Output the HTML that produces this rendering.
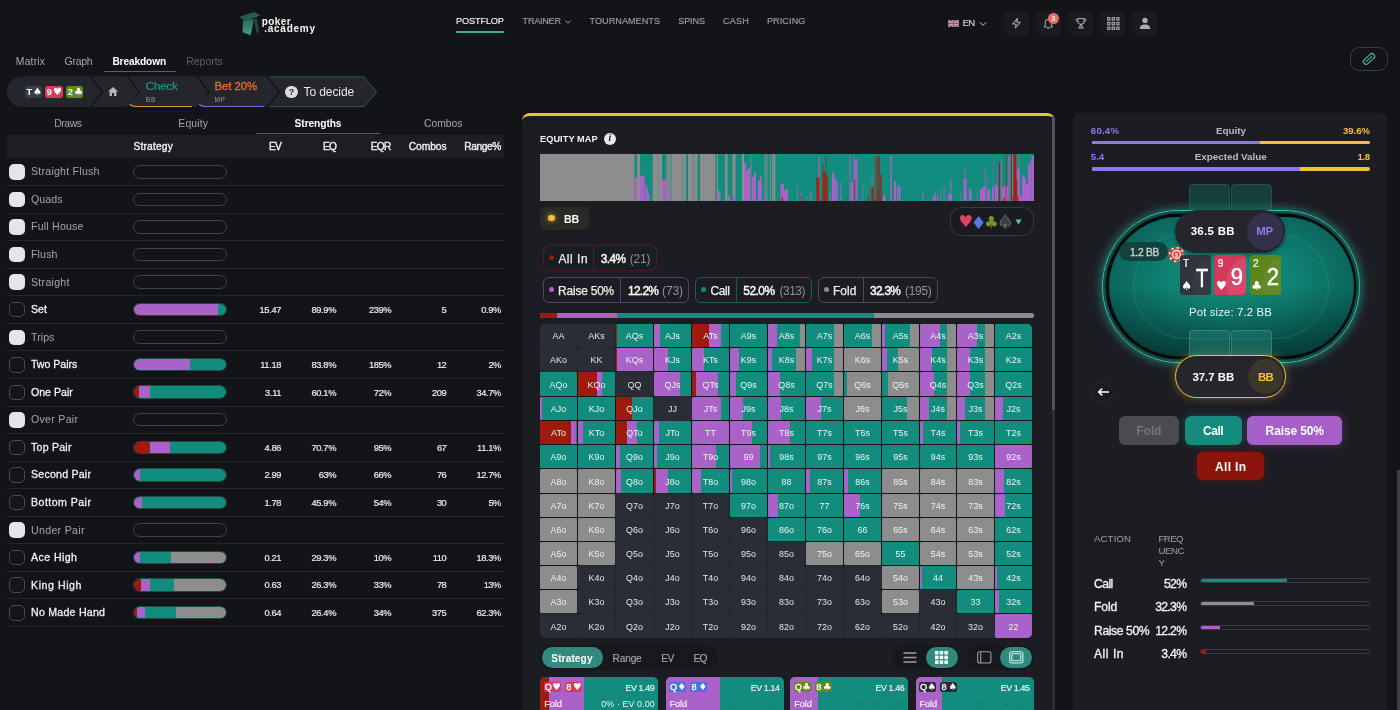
<!DOCTYPE html>
<html lang="en"><head><meta charset="utf-8"><title>Poker Academy - Postflop</title>
<style>
*{box-sizing:border-box;margin:0;padding:0}
html,body{width:1400px;height:710px;overflow:hidden;background:#131417}
body{position:relative;font-family:"Liberation Sans",sans-serif;color:#e8e8ec;font-size:11px}
#root{position:absolute;left:0;top:0;width:1400px;height:710px;overflow:hidden;will-change:transform}
.a{position:absolute}
.t{position:absolute;white-space:nowrap;line-height:1}
.b{font-weight:bold}
.r{text-align:right}
.c{text-align:center}
.nav{font-size:10.5px;letter-spacing:.35px;color:#a9abb3;top:16px}
.ib{position:absolute;top:11px;width:25px;height:25px;border-radius:6px;background:#1a1b1f}
.cb{position:absolute;left:9.4px;width:15.500px;height:15.500px;border-radius:5px}
.cb.on{background:#e4e4ea}
.cb.off{background:#141518;border:1px solid #474a54}
.lbl{position:absolute;left:31px;font-size:11.5px;line-height:1;white-space:nowrap;letter-spacing:.2px}
.sb{position:absolute;left:133.200px;width:93.500px;height:13.6px;border-radius:7px;border:1px solid #3f434c;overflow:hidden;background:#131417}
.sb.f{border-color:#1d4a45}
.sb i{position:absolute;top:0;bottom:0;display:block}
.num{position:absolute;font-size:9.5px;line-height:1;white-space:nowrap;text-align:right;width:60px;color:#ececf0}
.sep{position:absolute;left:7.4px;width:496.500px;height:1px;background:#24262c}
.cell{position:absolute;overflow:hidden;color:#f2f2f4;font-size:8.9px;text-align:center;letter-spacing:.05px}
.cell i{position:absolute;top:0;bottom:0;display:block}
.cell span{position:absolute;left:0;right:0;top:1px;bottom:-1px;z-index:2}
.chip{position:absolute;border-radius:6px;border:1px solid #444;height:26px}
</style></head><body>
<div id="root"><svg class="a" style="left:238px;top:10px" width="26" height="28" viewBox="0 0 26 28">
<defs><linearGradient id="lg1" x1="0" y1="0" x2="0" y2="1"><stop offset="0" stop-color="#2b675c"/><stop offset="1" stop-color="#459a88"/></linearGradient></defs>
<polygon points="16,9.5 18.6,8.0 21.2,21.7 18.5,23.4" fill="#234840"/>
<polygon points="5,8.8 16,9.5 12.7,25.3 4.6,22.3" fill="url(#lg1)"/>
<polygon points="1.7,6.7 16.2,2.1 22.5,5.6 7.8,10.6" fill="#2a5b51"/>
<polygon points="1.7,6.700 7.8,10.6 7.6,11.8 2.0,8.200" fill="#1e463e"/>
</svg>
<div class="t" style="top:17.00px;font-size:10.0px;color:#f4f4f6;letter-spacing:0.417px;font-weight:bold;left:261.70px;">poker</div>
<div class="t" style="top:24.00px;font-size:10.0px;color:#f4f4f6;letter-spacing:0.745px;font-weight:bold;left:264.20px;">.academy</div>
<div class="t" style="top:17.00px;font-size:9.1px;color:#f4f4f6;letter-spacing:-0.106px;-webkit-text-stroke:0.15px #f4f4f6;left:456.10px;">POSTFLOP</div>
<div class="t" style="top:17.00px;font-size:9.1px;color:#9c9ea6;letter-spacing:-0.257px;-webkit-text-stroke:0.15px #9c9ea6;left:522.60px;">TRAINER</div>
<div class="t" style="top:17.00px;font-size:9.1px;color:#9c9ea6;letter-spacing:0.029px;-webkit-text-stroke:0.15px #9c9ea6;left:589.60px;">TOURNAMENTS</div>
<div class="t" style="top:17.00px;font-size:9.1px;color:#9c9ea6;letter-spacing:-0.152px;-webkit-text-stroke:0.15px #9c9ea6;left:678.30px;">SPINS</div>
<div class="t" style="top:17.00px;font-size:9.1px;color:#9c9ea6;letter-spacing:0.239px;-webkit-text-stroke:0.15px #9c9ea6;left:722.90px;">CASH</div>
<div class="t" style="top:17.00px;font-size:9.1px;color:#9c9ea6;letter-spacing:0.097px;-webkit-text-stroke:0.15px #9c9ea6;left:766.90px;">PRICING</div>
<svg class="a" style="left:564px;top:18.5px" width="8" height="6" viewBox="0 0 8 6"><path d="M1.4 1.6 L4 4.1 L6.6 1.6" fill="none" stroke="#9c9ea6" stroke-width="1"/></svg>
<div class="a" style="left:456px;top:30.7px;width:48.3px;height:2.6px;background:#4da79e;border-radius:1.3px"></div>
<svg class="a" style="left:948px;top:19.5px" width="11" height="7" viewBox="0 0 11 7"><rect width="11" height="7" fill="#3b3f6e"/><path d="M0 0L11 7M11 0L0 7" stroke="#c9c9d4" stroke-width="1.6"/><path d="M0 0L11 7M11 0L0 7" stroke="#b3495a" stroke-width=".7"/><path d="M5.5 0V7M0 3.5H11" stroke="#c9c9d4" stroke-width="2.4"/><path d="M5.5 0V7M0 3.5H11" stroke="#b3495a" stroke-width="1.3"/></svg>
<div class="t" style="top:18.00px;font-size:9.6px;color:#c9cad0;letter-spacing:-0.700px;-webkit-text-stroke:0.2px #c9cad0;left:962.50px;">EN</div>
<svg class="a" style="left:979px;top:20.8px" width="8" height="6" viewBox="0 0 8 6"><path d="M1 1.4 L4 4.4 L7 1.4" fill="none" stroke="#c9cad0" stroke-width="1"/></svg>
<div class="ib" style="left:1004px"></div>
<div class="ib" style="left:1036px"></div>
<div class="ib" style="left:1068px"></div>
<div class="ib" style="left:1100px"></div>
<div class="ib" style="left:1132px"></div>
<svg class="a" style="left:1010px;top:17.3px" width="13" height="12.400" viewBox="0 0 13 15" preserveAspectRatio="none"><path d="M7.6 1.6 L2.6 8.4 H6.2 L5.2 13.2 L10.4 6.4 H6.8 Z" fill="none" stroke="#a3a5ac" stroke-width="1.1" stroke-linejoin="round"/></svg>
<svg class="a" style="left:1041px;top:16.2px" width="16" height="14.800" viewBox="0 0 16 17" preserveAspectRatio="none"><path d="M4.2 11.6 V7.6 C4.2 5.2 5.6 3.8 7.4 3.8 C9.2 3.8 10.6 5.2 10.6 7.6 V11.6 L11.6 12.8 H3.2 Z" fill="none" stroke="#a3a5ac" stroke-width="1.1" stroke-linejoin="round"/><path d="M6.4 14.2 H8.4" stroke="#a3a5ac" stroke-width="1.1" stroke-linecap="round"/></svg>
<div class="a" style="left:1048px;top:12.5px;width:11px;height:11px;border-radius:50%;background:#ee6a66"></div>
<div class="t b c" style="left:1048px;top:14.5px;width:11px;font-size:7px;color:#fff">3</div>
<svg class="a" style="left:1073px;top:16.3px" width="16" height="14.600" viewBox="0 0 16 17" preserveAspectRatio="none"><path d="M5 2.8 H11 V6.4 C11 8.4 9.6 9.6 8 9.6 C6.4 9.6 5 8.4 5 6.4 Z" fill="none" stroke="#a3a5ac" stroke-width="1.1" stroke-linejoin="round"/><path d="M5 3.8 H3 C3 5.8 3.8 6.8 5.2 7 M11 3.8 H13 C13 5.8 12.2 6.8 10.8 7" fill="none" stroke="#a3a5ac" stroke-width="1"/><path d="M8 9.6 L6.2 13.6 H9.8 Z M5.4 14 H10.6" fill="none" stroke="#a3a5ac" stroke-width="1.1" stroke-linejoin="round"/></svg>
<svg class="a" style="left:1106.7px;top:16.900px" width="13" height="13.500" viewBox="0 0 13 13.5"><rect x="0.00" y="0.00" width="3.6" height="3.700" rx=".8" fill="#9d9fa5"/><rect x="1.20" y="1.25" width="1.2" height="1.2" fill="#1a1b1f"/><rect x="4.55" y="0.00" width="3.6" height="3.700" rx=".8" fill="#9d9fa5"/><rect x="5.75" y="1.25" width="1.2" height="1.2" fill="#1a1b1f"/><rect x="9.10" y="0.00" width="3.6" height="3.700" rx=".8" fill="#9d9fa5"/><rect x="10.30" y="1.25" width="1.2" height="1.2" fill="#1a1b1f"/><rect x="0.00" y="4.75" width="3.6" height="3.700" rx=".8" fill="#9d9fa5"/><rect x="1.20" y="6.00" width="1.2" height="1.2" fill="#1a1b1f"/><rect x="4.55" y="4.75" width="3.6" height="3.700" rx=".8" fill="#9d9fa5"/><rect x="5.75" y="6.00" width="1.2" height="1.2" fill="#1a1b1f"/><rect x="9.10" y="4.75" width="3.6" height="3.700" rx=".8" fill="#9d9fa5"/><rect x="10.30" y="6.00" width="1.2" height="1.2" fill="#1a1b1f"/><rect x="0.00" y="9.50" width="3.6" height="3.700" rx=".8" fill="#9d9fa5"/><rect x="1.20" y="10.75" width="1.2" height="1.2" fill="#1a1b1f"/><rect x="4.55" y="9.50" width="3.6" height="3.700" rx=".8" fill="#9d9fa5"/><rect x="5.75" y="10.75" width="1.2" height="1.2" fill="#1a1b1f"/><rect x="9.10" y="9.50" width="3.6" height="3.700" rx=".8" fill="#9d9fa5"/><rect x="10.30" y="10.75" width="1.2" height="1.2" fill="#1a1b1f"/></svg>
<svg class="a" style="left:1138px;top:16px" width="14" height="15" viewBox="0 0 14 15"><circle cx="7" cy="4.4" r="2.7" fill="#a9abb2"/><path d="M1.8 13 C1.8 9.8 4 8.4 7 8.4 C10 8.4 12.2 9.8 12.2 13 Z" fill="#a9abb2"/></svg>
<div class="a" style="left:1350.2px;top:47px;width:37.800px;height:24px;border:1px solid #3a3d45;border-radius:9.5px"></div>
<svg class="a" style="left:1361.2px;top:51px" width="16" height="16" viewBox="-8 -8 16 16"><g transform="rotate(-42)" fill="none" stroke="#5aab99" stroke-linecap="round"><rect x="-6.6" y="-2.700" width="13.2" height="5.4" rx="2.700" stroke-width="1.25"/><path d="M-3.6 0 H3.600" stroke-width="1.2"/></g></svg>
<div class="t" style="top:57.00px;font-size:10.4px;color:#a5a7af;letter-spacing:0.178px;left:15.80px;">Matrix</div>
<div class="t" style="top:57.00px;font-size:10.4px;color:#a5a7af;letter-spacing:-0.251px;left:64.60px;">Graph</div>
<div class="t" style="top:57.00px;font-size:10.2px;color:#ffffff;letter-spacing:-0.135px;font-weight:bold;left:112.40px;">Breakdown</div>
<div class="t" style="top:57.00px;font-size:10.4px;color:#5d6068;letter-spacing:0.014px;left:186.30px;">Reports</div>
<div class="a" style="left:103.6px;top:70.7px;width:72px;height:1.6px;background:#2b7469"></div>
<svg class="a" style="left:0;top:74px" width="390" height="36" viewBox="0 74 390 36">
<path d="M22.2 76.6 H89.5 L101.5 91.8 L89.5 107 H22.2 A15.2 15.2 0 0 1 22.2 76.6 Z" fill="#24262c"/>
<path d="M91.3 76.6 H126.5 L138.5 91.8 L126.5 107 H91.3 L103.3 91.8 Z" fill="#24262c"/>
<path d="M128.300 76.6 H196 L208 91.8 L196 107 H135.500 Q131.3 107 128.9 103.800 L140.3 91.8 Z" fill="#24262c"/>
<path d="M129.400 104.2 Q131.800 106.500 136.300 106.500 H192" fill="none" stroke="#c9a33a" stroke-width="1.2"/>
<path d="M268.400 76.9 H364 L376.600 91.8 L364 106.700 H268.400 L280.400 91.8 Z" fill="#24262c"/>
<path d="M269.8 76.9 H364 L376.600 91.8 L364 106.700 H269.800" fill="none" stroke="#2c5a52" stroke-width="1"/>
<path d="M197.800 76.6 H266.600 L278.600 91.8 L266.600 107 H205 Q200.800 107 198.400 103.800 L209.800 91.8 Z" fill="#24262c"/>
<path d="M198.900 104.2 Q201.300 106.500 205.800 106.500 H264" fill="none" stroke="#7a6be0" stroke-width="1.2"/>
</svg>
<div class="a" style="left:24.7px;top:86.3px;width:17.1px;height:11.3px;border-radius:3px;background:#3a3d4a"></div>
<div class="t" style="top:88.00px;font-size:9.2px;color:#fff;font-weight:bold;left:26.50px;">T</div>
<div class="t" style="left:32.9px;top:86.6px;font-size:10px;color:#fff;font-family:'DejaVu Sans',sans-serif">&#9824;</div>
<div class="a" style="left:44.9px;top:86.3px;width:17.9px;height:11.3px;border-radius:3px;background:#d63b5b"></div>
<div class="t" style="top:88.00px;font-size:9.2px;color:#fff;font-weight:bold;left:46.70px;">9</div>
<div class="t" style="left:53.099999999999994px;top:86.6px;font-size:10px;color:#fff;font-family:'DejaVu Sans',sans-serif">&#9829;</div>
<div class="a" style="left:65.9px;top:86.3px;width:17.3px;height:11.3px;border-radius:3px;background:#5f8a1e"></div>
<div class="t" style="top:88.00px;font-size:9.2px;color:#fff;font-weight:bold;left:67.70px;">2</div>
<div class="t" style="left:74.10000000000001px;top:86.6px;font-size:10px;color:#fff;font-family:'DejaVu Sans',sans-serif">&#9827;</div>
<svg class="a" style="left:107px;top:86.300px" width="12" height="11" viewBox="0 0 12 11"><path d="M6 1 L1 5.4 H2.6 V10 H5 V7 H7 V10 H9.4 V5.4 H11 Z" fill="#b4b6bd"/></svg>
<div class="t" style="top:80.00px;font-size:11.6px;color:#1f9c89;letter-spacing:-0.245px;-webkit-text-stroke:0.15px #1f9c89;left:145.80px;">Check</div>
<div class="t" style="top:97.00px;font-size:6.6px;color:#9a9ca5;letter-spacing:0.795px;left:145.80px;">BB</div>
<div class="t" style="top:81.00px;font-size:11.4px;color:#e8702a;letter-spacing:-0.066px;-webkit-text-stroke:0.3px #e8702a;left:214.50px;">Bet 20%</div>
<div class="t" style="top:97.00px;font-size:6.6px;color:#9a9ca5;letter-spacing:0.499px;left:214.50px;">MP</div>
<div class="a" style="left:285.2px;top:85.800px;width:12.4px;height:12.4px;border-radius:50%;background:#dcdde2"></div>
<div class="t" style="top:88.00px;font-size:9px;color:#24262c;font-weight:bold;left:91.40px;width:400px;text-align:center;">?</div>
<div class="t" style="top:86.00px;font-size:12px;color:#e6e7ea;letter-spacing:-0.084px;left:303.50px;">To decide</div>
<div class="t" style="top:119.00px;font-size:10.4px;color:#a5a7af;letter-spacing:-0.392px;left:54.20px;">Draws</div>
<div class="t" style="top:119.00px;font-size:10.4px;color:#a5a7af;letter-spacing:0.159px;left:178.30px;">Equity</div>
<div class="t" style="top:119.00px;font-size:10.2px;color:#ffffff;letter-spacing:-0.076px;font-weight:bold;left:294.60px;">Strengths</div>
<div class="t" style="top:119.00px;font-size:10.4px;color:#a5a7af;letter-spacing:-0.065px;left:424.00px;">Combos</div>
<div class="a" style="left:256px;top:132.9px;width:123.6px;height:1.6px;background:#2b7469"></div>
<div class="a" style="left:7.4px;top:134.5px;width:496.5px;height:23.500px;background:#1d1e24"></div>
<div class="t" style="top:142.00px;font-size:10.2px;color:#f0f0f3;letter-spacing:0.216px;-webkit-text-stroke:0.35px #f0f0f3;left:133.40px;">Strategy</div>
<div class="t" style="top:142.00px;font-size:10.2px;color:#f0f0f3;letter-spacing:-0.700px;-webkit-text-stroke:0.35px #f0f0f3;left:-118.90px;width:400px;text-align:right;">EV</div>
<div class="t" style="top:142.00px;font-size:10.2px;color:#f0f0f3;letter-spacing:-0.700px;-webkit-text-stroke:0.35px #f0f0f3;left:-63.70px;width:400px;text-align:right;">EQ</div>
<div class="t" style="top:142.00px;font-size:10.2px;color:#f0f0f3;letter-spacing:-0.700px;-webkit-text-stroke:0.35px #f0f0f3;left:-9.40px;width:400px;text-align:right;">EQR</div>
<div class="t" style="top:142.00px;font-size:10.2px;color:#f0f0f3;-webkit-text-stroke:0.35px #f0f0f3;left:46.60px;width:400px;text-align:right;">Combos</div>
<div class="t" style="top:142.00px;font-size:10.2px;color:#f0f0f3;letter-spacing:-0.405px;-webkit-text-stroke:0.35px #f0f0f3;left:100.99px;width:400px;text-align:right;">Range%</div>
<div class="sep" style="top:185.1px"></div>
<div class="cb on" style="top:164.2px"></div>
<div class="t" style="top:166.00px;font-size:10.6px;color:#a4a6ae;letter-spacing:0.239px;left:31.00px;">Straight Flush</div>
<div class="sb" style="top:165.0px"></div>
<div class="sep" style="top:212.6px"></div>
<div class="cb on" style="top:191.7px"></div>
<div class="t" style="top:194.00px;font-size:10.6px;color:#a4a6ae;letter-spacing:0.067px;left:31.00px;">Quads</div>
<div class="sb" style="top:192.5px"></div>
<div class="sep" style="top:240.2px"></div>
<div class="cb on" style="top:219.3px"></div>
<div class="t" style="top:221.00px;font-size:10.6px;color:#a4a6ae;letter-spacing:0.204px;left:31.00px;">Full House</div>
<div class="sb" style="top:220.1px"></div>
<div class="sep" style="top:267.7px"></div>
<div class="cb on" style="top:246.8px"></div>
<div class="t" style="top:249.00px;font-size:10.6px;color:#a4a6ae;letter-spacing:0.145px;left:31.00px;">Flush</div>
<div class="sb" style="top:247.6px"></div>
<div class="sep" style="top:295.2px"></div>
<div class="cb on" style="top:274.4px"></div>
<div class="t" style="top:277.00px;font-size:10.6px;color:#a4a6ae;letter-spacing:0.281px;left:31.00px;">Straight</div>
<div class="sb" style="top:275.2px"></div>
<div class="sep" style="top:322.8px"></div>
<div class="cb off" style="top:301.9px"></div>
<div class="t" style="top:304.00px;font-size:10.6px;color:#f4f4f6;letter-spacing:0.045px;-webkit-text-stroke:0.28px #f4f4f6;left:31.00px;">Set</div>
<div class="sb f" style="top:302.7px"><i style="left:0.0%;width:92.0%;background:#a862c8"></i><i style="left:91.5%;width:9.0%;background:#128c7d"></i></div>
<div class="t" style="top:306.00px;font-size:9.3px;color:#ececf0;letter-spacing:-0.320px;-webkit-text-stroke:0.2px #ececf0;left:-118.82px;width:400px;text-align:right;">15.47</div>
<div class="t" style="top:306.00px;font-size:9.3px;color:#ececf0;letter-spacing:-0.363px;-webkit-text-stroke:0.2px #ececf0;left:-63.96px;width:400px;text-align:right;">89.9%</div>
<div class="t" style="top:306.00px;font-size:9.3px;color:#ececf0;letter-spacing:-0.436px;-webkit-text-stroke:0.2px #ececf0;left:-9.04px;width:400px;text-align:right;">239%</div>
<div class="t" style="top:306.00px;font-size:9.3px;color:#ececf0;letter-spacing:-0.284px;-webkit-text-stroke:0.2px #ececf0;left:46.42px;width:400px;text-align:right;">5</div>
<div class="t" style="top:306.00px;font-size:9.3px;color:#ececf0;letter-spacing:-0.389px;-webkit-text-stroke:0.2px #ececf0;left:100.91px;width:400px;text-align:right;">0.9%</div>
<div class="sep" style="top:350.4px"></div>
<div class="cb on" style="top:329.5px"></div>
<div class="t" style="top:332.00px;font-size:10.6px;color:#a4a6ae;letter-spacing:0.059px;left:31.00px;">Trips</div>
<div class="sb" style="top:330.3px"></div>
<div class="sep" style="top:377.9px"></div>
<div class="cb off" style="top:357.0px"></div>
<div class="t" style="top:359.00px;font-size:10.6px;color:#f4f4f6;letter-spacing:-0.017px;-webkit-text-stroke:0.28px #f4f4f6;left:31.00px;">Two Pairs</div>
<div class="sb f" style="top:357.8px"><i style="left:0.0%;width:61.0%;background:#a862c8"></i><i style="left:60.5%;width:40.0%;background:#128c7d"></i></div>
<div class="t" style="top:361.00px;font-size:9.3px;color:#ececf0;letter-spacing:-0.311px;-webkit-text-stroke:0.2px #ececf0;left:-118.81px;width:400px;text-align:right;">11.18</div>
<div class="t" style="top:361.00px;font-size:9.3px;color:#ececf0;letter-spacing:-0.363px;-webkit-text-stroke:0.2px #ececf0;left:-63.96px;width:400px;text-align:right;">83.8%</div>
<div class="t" style="top:361.00px;font-size:9.3px;color:#ececf0;letter-spacing:-0.436px;-webkit-text-stroke:0.2px #ececf0;left:-9.04px;width:400px;text-align:right;">185%</div>
<div class="t" style="top:361.00px;font-size:9.3px;color:#ececf0;letter-spacing:-0.569px;-webkit-text-stroke:0.2px #ececf0;left:46.13px;width:400px;text-align:right;">12</div>
<div class="t" style="top:361.00px;font-size:9.3px;color:#ececf0;letter-spacing:-0.700px;-webkit-text-stroke:0.2px #ececf0;left:100.60px;width:400px;text-align:right;">2%</div>
<div class="sep" style="top:405.5px"></div>
<div class="cb off" style="top:384.6px"></div>
<div class="t" style="top:387.00px;font-size:10.6px;color:#f4f4f6;letter-spacing:-0.005px;-webkit-text-stroke:0.28px #f4f4f6;left:31.00px;">One Pair</div>
<div class="sb f" style="top:385.4px"><i style="left:0.0%;width:6.0%;background:#9e1a0c"></i><i style="left:5.5%;width:12.0%;background:#a862c8"></i><i style="left:17.0%;width:83.5%;background:#128c7d"></i></div>
<div class="t" style="top:389.00px;font-size:9.3px;color:#ececf0;letter-spacing:-0.319px;-webkit-text-stroke:0.2px #ececf0;left:-118.82px;width:400px;text-align:right;">3.11</div>
<div class="t" style="top:389.00px;font-size:9.3px;color:#ececf0;letter-spacing:-0.363px;-webkit-text-stroke:0.2px #ececf0;left:-63.96px;width:400px;text-align:right;">60.1%</div>
<div class="t" style="top:389.00px;font-size:9.3px;color:#ececf0;letter-spacing:-0.512px;-webkit-text-stroke:0.2px #ececf0;left:-9.11px;width:400px;text-align:right;">72%</div>
<div class="t" style="top:389.00px;font-size:9.3px;color:#ececf0;letter-spacing:-0.427px;-webkit-text-stroke:0.2px #ececf0;left:46.27px;width:400px;text-align:right;">209</div>
<div class="t" style="top:389.00px;font-size:9.3px;color:#ececf0;letter-spacing:-0.363px;-webkit-text-stroke:0.2px #ececf0;left:100.94px;width:400px;text-align:right;">34.7%</div>
<div class="sep" style="top:433.0px"></div>
<div class="cb on" style="top:412.1px"></div>
<div class="t" style="top:414.00px;font-size:10.6px;color:#a4a6ae;letter-spacing:0.279px;left:31.00px;">Over Pair</div>
<div class="sb" style="top:412.9px"></div>
<div class="sep" style="top:460.6px"></div>
<div class="cb off" style="top:439.7px"></div>
<div class="t" style="top:442.00px;font-size:10.6px;color:#f4f4f6;letter-spacing:0.230px;-webkit-text-stroke:0.28px #f4f4f6;left:31.00px;">Top Pair</div>
<div class="sb f" style="top:440.5px"><i style="left:0.0%;width:17.5%;background:#9e1a0c"></i><i style="left:17.0%;width:22.5%;background:#a862c8"></i><i style="left:39.0%;width:61.5%;background:#128c7d"></i></div>
<div class="t" style="top:444.00px;font-size:9.3px;color:#ececf0;letter-spacing:-0.332px;-webkit-text-stroke:0.2px #ececf0;left:-118.83px;width:400px;text-align:right;">4.86</div>
<div class="t" style="top:444.00px;font-size:9.3px;color:#ececf0;letter-spacing:-0.363px;-webkit-text-stroke:0.2px #ececf0;left:-63.96px;width:400px;text-align:right;">70.7%</div>
<div class="t" style="top:444.00px;font-size:9.3px;color:#ececf0;letter-spacing:-0.512px;-webkit-text-stroke:0.2px #ececf0;left:-9.11px;width:400px;text-align:right;">95%</div>
<div class="t" style="top:444.00px;font-size:9.3px;color:#ececf0;letter-spacing:-0.569px;-webkit-text-stroke:0.2px #ececf0;left:46.13px;width:400px;text-align:right;">67</div>
<div class="t" style="top:444.00px;font-size:9.3px;color:#ececf0;letter-spacing:-0.353px;-webkit-text-stroke:0.2px #ececf0;left:100.95px;width:400px;text-align:right;">11.1%</div>
<div class="sep" style="top:488.1px"></div>
<div class="cb off" style="top:467.2px"></div>
<div class="t" style="top:469.00px;font-size:10.6px;color:#f4f4f6;letter-spacing:0.225px;-webkit-text-stroke:0.28px #f4f4f6;left:31.00px;">Second Pair</div>
<div class="sb f" style="top:468.0px"><i style="left:0.0%;width:7.0%;background:#a862c8"></i><i style="left:6.5%;width:94.0%;background:#128c7d"></i></div>
<div class="t" style="top:471.00px;font-size:9.3px;color:#ececf0;letter-spacing:-0.332px;-webkit-text-stroke:0.2px #ececf0;left:-118.83px;width:400px;text-align:right;">2.99</div>
<div class="t" style="top:471.00px;font-size:9.3px;color:#ececf0;letter-spacing:-0.512px;-webkit-text-stroke:0.2px #ececf0;left:-64.11px;width:400px;text-align:right;">63%</div>
<div class="t" style="top:471.00px;font-size:9.3px;color:#ececf0;letter-spacing:-0.512px;-webkit-text-stroke:0.2px #ececf0;left:-9.11px;width:400px;text-align:right;">66%</div>
<div class="t" style="top:471.00px;font-size:9.3px;color:#ececf0;letter-spacing:-0.569px;-webkit-text-stroke:0.2px #ececf0;left:46.13px;width:400px;text-align:right;">76</div>
<div class="t" style="top:471.00px;font-size:9.3px;color:#ececf0;letter-spacing:-0.363px;-webkit-text-stroke:0.2px #ececf0;left:100.94px;width:400px;text-align:right;">12.7%</div>
<div class="sep" style="top:515.7px"></div>
<div class="cb off" style="top:494.8px"></div>
<div class="t" style="top:497.00px;font-size:10.6px;color:#f4f4f6;letter-spacing:0.462px;-webkit-text-stroke:0.28px #f4f4f6;left:31.00px;">Bottom Pair</div>
<div class="sb f" style="top:495.6px"><i style="left:0.0%;width:9.5%;background:#a862c8"></i><i style="left:9.0%;width:91.5%;background:#128c7d"></i></div>
<div class="t" style="top:499.00px;font-size:9.3px;color:#ececf0;letter-spacing:-0.332px;-webkit-text-stroke:0.2px #ececf0;left:-118.83px;width:400px;text-align:right;">1.78</div>
<div class="t" style="top:499.00px;font-size:9.3px;color:#ececf0;letter-spacing:-0.363px;-webkit-text-stroke:0.2px #ececf0;left:-63.96px;width:400px;text-align:right;">45.9%</div>
<div class="t" style="top:499.00px;font-size:9.3px;color:#ececf0;letter-spacing:-0.512px;-webkit-text-stroke:0.2px #ececf0;left:-9.11px;width:400px;text-align:right;">54%</div>
<div class="t" style="top:499.00px;font-size:9.3px;color:#ececf0;letter-spacing:-0.569px;-webkit-text-stroke:0.2px #ececf0;left:46.13px;width:400px;text-align:right;">30</div>
<div class="t" style="top:499.00px;font-size:9.3px;color:#ececf0;letter-spacing:-0.700px;-webkit-text-stroke:0.2px #ececf0;left:100.60px;width:400px;text-align:right;">5%</div>
<div class="sep" style="top:543.2px"></div>
<div class="cb on" style="top:522.3px"></div>
<div class="t" style="top:525.00px;font-size:10.6px;color:#a4a6ae;letter-spacing:0.315px;left:31.00px;">Under Pair</div>
<div class="sb" style="top:523.1px"></div>
<div class="sep" style="top:570.8px"></div>
<div class="cb off" style="top:549.9px"></div>
<div class="t" style="top:552.00px;font-size:10.6px;color:#f4f4f6;letter-spacing:0.427px;-webkit-text-stroke:0.28px #f4f4f6;left:31.00px;">Ace High</div>
<div class="sb f" style="top:550.7px"><i style="left:0.0%;width:7.0%;background:#a862c8"></i><i style="left:6.5%;width:34.0%;background:#128c7d"></i><i style="left:40.0%;width:60.5%;background:#8d8d8d"></i></div>
<div class="t" style="top:554.00px;font-size:9.3px;color:#ececf0;letter-spacing:-0.332px;-webkit-text-stroke:0.2px #ececf0;left:-118.83px;width:400px;text-align:right;">0.21</div>
<div class="t" style="top:554.00px;font-size:9.3px;color:#ececf0;letter-spacing:-0.363px;-webkit-text-stroke:0.2px #ececf0;left:-63.96px;width:400px;text-align:right;">29.3%</div>
<div class="t" style="top:554.00px;font-size:9.3px;color:#ececf0;letter-spacing:-0.512px;-webkit-text-stroke:0.2px #ececf0;left:-9.11px;width:400px;text-align:right;">10%</div>
<div class="t" style="top:554.00px;font-size:9.3px;color:#ececf0;letter-spacing:-0.408px;-webkit-text-stroke:0.2px #ececf0;left:46.29px;width:400px;text-align:right;">110</div>
<div class="t" style="top:554.00px;font-size:9.3px;color:#ececf0;letter-spacing:-0.363px;-webkit-text-stroke:0.2px #ececf0;left:100.94px;width:400px;text-align:right;">18.3%</div>
<div class="sep" style="top:598.3px"></div>
<div class="cb off" style="top:577.4px"></div>
<div class="t" style="top:580.00px;font-size:10.6px;color:#f4f4f6;letter-spacing:0.567px;-webkit-text-stroke:0.28px #f4f4f6;left:31.00px;">King High</div>
<div class="sb f" style="top:578.2px"><i style="left:0.0%;width:7.5%;background:#9e1a0c"></i><i style="left:7.0%;width:11.0%;background:#a862c8"></i><i style="left:17.5%;width:27.0%;background:#128c7d"></i><i style="left:44.0%;width:56.5%;background:#8d8d8d"></i></div>
<div class="t" style="top:581.00px;font-size:9.3px;color:#ececf0;letter-spacing:-0.332px;-webkit-text-stroke:0.2px #ececf0;left:-118.83px;width:400px;text-align:right;">0.63</div>
<div class="t" style="top:581.00px;font-size:9.3px;color:#ececf0;letter-spacing:-0.363px;-webkit-text-stroke:0.2px #ececf0;left:-63.96px;width:400px;text-align:right;">26.3%</div>
<div class="t" style="top:581.00px;font-size:9.3px;color:#ececf0;letter-spacing:-0.512px;-webkit-text-stroke:0.2px #ececf0;left:-9.11px;width:400px;text-align:right;">33%</div>
<div class="t" style="top:581.00px;font-size:9.3px;color:#ececf0;letter-spacing:-0.569px;-webkit-text-stroke:0.2px #ececf0;left:46.13px;width:400px;text-align:right;">78</div>
<div class="t" style="top:581.00px;font-size:9.3px;color:#ececf0;letter-spacing:-0.512px;-webkit-text-stroke:0.2px #ececf0;left:100.79px;width:400px;text-align:right;">13%</div>
<div class="sep" style="top:625.9px"></div>
<div class="cb off" style="top:605.0px"></div>
<div class="t" style="top:607.00px;font-size:10.6px;color:#f4f4f6;letter-spacing:0.246px;-webkit-text-stroke:0.28px #f4f4f6;left:31.00px;">No Made Hand</div>
<div class="sb f" style="top:605.8px"><i style="left:0.0%;width:3.5%;background:#9e1a0c"></i><i style="left:3.0%;width:9.5%;background:#a862c8"></i><i style="left:12.0%;width:34.5%;background:#128c7d"></i><i style="left:46.0%;width:54.5%;background:#8d8d8d"></i></div>
<div class="t" style="top:609.00px;font-size:9.3px;color:#ececf0;letter-spacing:-0.332px;-webkit-text-stroke:0.2px #ececf0;left:-118.83px;width:400px;text-align:right;">0.64</div>
<div class="t" style="top:609.00px;font-size:9.3px;color:#ececf0;letter-spacing:-0.363px;-webkit-text-stroke:0.2px #ececf0;left:-63.96px;width:400px;text-align:right;">26.4%</div>
<div class="t" style="top:609.00px;font-size:9.3px;color:#ececf0;letter-spacing:-0.512px;-webkit-text-stroke:0.2px #ececf0;left:-9.11px;width:400px;text-align:right;">34%</div>
<div class="t" style="top:609.00px;font-size:9.3px;color:#ececf0;letter-spacing:-0.427px;-webkit-text-stroke:0.2px #ececf0;left:46.27px;width:400px;text-align:right;">375</div>
<div class="t" style="top:609.00px;font-size:9.3px;color:#ececf0;letter-spacing:-0.363px;-webkit-text-stroke:0.2px #ececf0;left:100.94px;width:400px;text-align:right;">62.3%</div>
<div class="a" style="left:522.4px;top:112.8px;width:532.4px;height:620px;background:#1c1d23;border-top:3.6px solid #f0c23c;border-radius:8px 8px 0 0"></div>
<div class="a" style="left:1051.6px;top:116.4px;width:3.2px;height:600px;background:#2b2c31"></div>
<div class="a" style="left:1051.6px;top:116.4px;width:3.2px;height:294px;background:#525459;border-radius:0 3px 0 0"></div>
<div class="t" style="top:135.00px;font-size:9.2px;color:#f2f2f4;letter-spacing:0.068px;font-weight:bold;left:540.00px;">EQUITY MAP</div>
<div class="a" style="left:603.7px;top:132.8px;width:12.4px;height:12.4px;border-radius:50%;background:#e8e8ec"></div>
<div class="t b c" style="left:603.7px;top:134.2px;width:12.4px;font-size:9.5px;color:#1c1d23;font-family:'Liberation Serif',serif;font-style:italic">i</div>
<svg class="a" style="left:540px;top:154px" width="494" height="47" viewBox="540 154 494 47"><rect x="540" y="154" width="494" height="47" fill="#128c7d"/><rect x="540.0" y="154.0" width="94.5" height="47.0" fill="#8d8d8d"/><rect x="637.0" y="154.0" width="3.0" height="47.0" fill="#8d8d8d"/><rect x="652.5" y="154.0" width="9.5" height="47.0" fill="#8d8d8d"/><rect x="666.5" y="154.0" width="19.5" height="47.0" fill="#8d8d8d"/><rect x="688.0" y="154.0" width="9.5" height="47.0" fill="#8d8d8d"/><rect x="700.0" y="154.0" width="15.5" height="47.0" fill="#8d8d8d"/><rect x="717.0" y="154.0" width="1.0" height="47.0" fill="#8d8d8d"/><rect x="725.0" y="154.0" width="2.5" height="47.0" fill="#8d8d8d"/><rect x="732.5" y="154.0" width="3.0" height="47.0" fill="#8d8d8d"/><rect x="742.0" y="154.0" width="2.0" height="47.0" fill="#8d8d8d"/><rect x="750.0" y="154.0" width="1.5" height="47.0" fill="#8d8d8d" fill-opacity="0.55"/><rect x="764.5" y="154.0" width="1.5" height="47.0" fill="#8d8d8d" fill-opacity="0.7"/><rect x="766.5" y="154.0" width="1.0" height="47.0" fill="#8d8d8d" fill-opacity="0.8"/><rect x="769.5" y="154.0" width="1.5" height="47.0" fill="#8d8d8d" fill-opacity="0.7"/><rect x="772.0" y="154.0" width="3.5" height="47.0" fill="#8d8d8d" fill-opacity="0.85"/><rect x="1012.0" y="154.0" width="1.0" height="47.0" fill="#8d8d8d" fill-opacity="0.6"/><rect x="668.0" y="154.0" width="0.8" height="47.0" fill="#128c7d" fill-opacity="0.6"/><rect x="670.5" y="154.0" width="1.0" height="47.0" fill="#128c7d" fill-opacity="0.7"/><rect x="682.3" y="154.0" width="0.7" height="47.0" fill="#128c7d" fill-opacity="0.6"/><rect x="693.0" y="154.0" width="0.7" height="47.0" fill="#128c7d" fill-opacity="0.7"/><rect x="657.8" y="154.0" width="0.7" height="47.0" fill="#128c7d" fill-opacity="0.35"/><rect x="650.0" y="154.0" width="2.5" height="47.0" fill="#128c7d" fill-opacity="0.85"/><rect x="634.5" y="177.5" width="2.5" height="23.5" fill="#a862c8"/><rect x="640.0" y="175.6" width="4.5" height="25.4" fill="#a862c8"/><rect x="645.0" y="184.1" width="1.5" height="16.9" fill="#a862c8"/><rect x="646.5" y="187.8" width="1.5" height="13.2" fill="#a862c8"/><rect x="648.0" y="193.5" width="1.5" height="7.5" fill="#a862c8"/><rect x="662.0" y="179.4" width="4.5" height="21.6" fill="#a862c8"/><rect x="668.0" y="186.9" width="0.8" height="14.1" fill="#a862c8"/><rect x="670.5" y="191.6" width="1.0" height="9.4" fill="#a862c8"/><rect x="718.0" y="190.7" width="2.5" height="10.3" fill="#a862c8"/><rect x="728.0" y="195.4" width="2.0" height="5.6" fill="#a862c8"/><rect x="733.0" y="195.4" width="2.0" height="5.6" fill="#a862c8"/><rect x="744.0" y="162.5" width="2.0" height="38.5" fill="#a862c8"/><rect x="746.0" y="170.0" width="2.0" height="31.0" fill="#a862c8"/><rect x="748.0" y="168.1" width="2.0" height="32.9" fill="#a862c8"/><rect x="752.0" y="176.6" width="2.0" height="24.4" fill="#a862c8"/><rect x="754.0" y="172.8" width="2.0" height="28.2" fill="#a862c8"/><rect x="758.0" y="180.3" width="2.0" height="20.7" fill="#a862c8"/><rect x="760.0" y="176.6" width="2.0" height="24.4" fill="#a862c8"/><rect x="764.0" y="198.7" width="3.5" height="2.4" fill="#a862c8"/><rect x="780.5" y="184.1" width="3.5" height="16.9" fill="#a862c8"/><rect x="784.0" y="190.7" width="2.0" height="10.3" fill="#a862c8"/><rect x="786.0" y="189.2" width="2.0" height="11.8" fill="#a862c8"/><rect x="797.0" y="185.0" width="1.0" height="16.0" fill="#a862c8" fill-opacity="0.6"/><rect x="800.0" y="193.5" width="1.5" height="7.5" fill="#a862c8"/><rect x="806.5" y="196.3" width="1.0" height="4.7" fill="#a862c8" fill-opacity="0.5"/><rect x="810.0" y="190.7" width="2.0" height="10.3" fill="#a862c8" fill-opacity="0.6"/><rect x="816.0" y="192.5" width="2.0" height="8.5" fill="#a862c8"/><rect x="818.3" y="156.3" width="1.7" height="44.6" fill="#a862c8" fill-opacity="0.75"/><rect x="832.0" y="172.8" width="2.5" height="28.2" fill="#a862c8"/><rect x="834.5" y="179.4" width="2.0" height="21.6" fill="#a862c8"/><rect x="836.5" y="182.2" width="1.5" height="18.8" fill="#a862c8"/><rect x="829.5" y="192.5" width="1.5" height="8.5" fill="#a862c8" fill-opacity="0.6"/><rect x="840.0" y="182.2" width="1.3" height="18.8" fill="#a862c8" fill-opacity="0.7"/><rect x="849.0" y="154.0" width="1.8" height="47.0" fill="#a862c8" fill-opacity="0.55"/><rect x="850.8" y="182.2" width="2.2" height="18.8" fill="#a862c8"/><rect x="852.5" y="154.9" width="1.0" height="46.1" fill="#a862c8" fill-opacity="0.5"/><rect x="854.0" y="158.7" width="3.5" height="42.3" fill="#a862c8" fill-opacity="0.9"/><rect x="862.0" y="184.6" width="1.2" height="16.4" fill="#a862c8" fill-opacity="0.7"/><rect x="871.5" y="172.8" width="1.3" height="28.2" fill="#a862c8" fill-opacity="0.55"/><rect x="883.0" y="195.4" width="2.5" height="5.6" fill="#a862c8"/><rect x="890.0" y="155.9" width="2.0" height="45.1" fill="#a862c8" fill-opacity="0.7"/><rect x="894.0" y="181.3" width="2.0" height="19.7" fill="#a862c8"/><rect x="897.0" y="185.5" width="1.5" height="15.5" fill="#a862c8"/><rect x="899.0" y="185.5" width="1.5" height="15.5" fill="#a862c8"/><rect x="922.0" y="192.5" width="1.5" height="8.5" fill="#a862c8" fill-opacity="0.7"/><rect x="926.5" y="195.4" width="0.7" height="5.6" fill="#a862c8" fill-opacity="0.5"/><rect x="932.5" y="196.3" width="2.0" height="4.7" fill="#a862c8"/><rect x="935.0" y="190.7" width="1.0" height="10.3" fill="#a862c8"/><rect x="937.0" y="194.4" width="1.0" height="6.6" fill="#a862c8"/><rect x="940.0" y="190.7" width="1.0" height="10.3" fill="#a862c8" fill-opacity="0.8"/><rect x="943.3" y="186.9" width="1.7" height="14.1" fill="#a862c8" fill-opacity="0.6"/><rect x="948.0" y="193.9" width="4.0" height="7.0" fill="#a862c8"/><rect x="950.0" y="180.3" width="1.6" height="20.7" fill="#a862c8" fill-opacity="0.7"/><rect x="960.0" y="190.7" width="0.8" height="10.3" fill="#a862c8" fill-opacity="0.7"/><rect x="963.5" y="178.4" width="3.0" height="22.6" fill="#a862c8"/><rect x="964.2" y="167.2" width="1.4" height="33.8" fill="#a862c8" fill-opacity="0.6"/><rect x="969.0" y="188.8" width="2.5" height="12.2" fill="#a862c8"/><rect x="977.0" y="192.5" width="1.0" height="8.5" fill="#a862c8" fill-opacity="0.7"/><rect x="980.0" y="188.8" width="3.0" height="12.2" fill="#a862c8"/><rect x="983.0" y="186.9" width="3.0" height="14.1" fill="#a862c8"/><rect x="984.5" y="167.2" width="1.2" height="33.8" fill="#a862c8" fill-opacity="0.7"/><rect x="987.0" y="189.7" width="3.0" height="11.3" fill="#a862c8"/><rect x="987.0" y="172.8" width="0.8" height="28.2" fill="#a862c8" fill-opacity="0.6"/><rect x="992.0" y="186.9" width="2.0" height="14.1" fill="#a862c8"/><rect x="993.0" y="155.9" width="0.8" height="45.1" fill="#a862c8" fill-opacity="0.5"/><rect x="995.0" y="185.0" width="3.0" height="16.0" fill="#a862c8"/><rect x="996.8" y="165.3" width="1.0" height="35.7" fill="#a862c8" fill-opacity="0.6"/><rect x="1000.5" y="158.7" width="1.5" height="42.3" fill="#a862c8" fill-opacity="0.55"/><rect x="1002.0" y="186.9" width="3.0" height="14.1" fill="#a862c8"/><rect x="1005.0" y="186.0" width="3.0" height="15.0" fill="#a862c8"/><rect x="1008.0" y="155.9" width="2.0" height="45.1" fill="#a862c8" fill-opacity="0.65"/><rect x="1017.0" y="168.1" width="3.0" height="32.9" fill="#a862c8"/><rect x="1018.5" y="155.9" width="1.0" height="45.1" fill="#a862c8" fill-opacity="0.6"/><rect x="1020.0" y="196.3" width="2.0" height="4.7" fill="#a862c8"/><rect x="1022.0" y="175.2" width="2.0" height="25.9" fill="#a862c8"/><rect x="1024.0" y="177.5" width="2.0" height="23.5" fill="#a862c8"/><rect x="1026.0" y="184.1" width="2.0" height="16.9" fill="#a862c8"/><rect x="1028.0" y="164.3" width="2.0" height="36.7" fill="#a862c8"/><rect x="1030.0" y="160.6" width="1.5" height="40.4" fill="#a862c8"/><rect x="1031.5" y="155.9" width="2.5" height="45.1" fill="#a862c8"/><rect x="781.8" y="197.2" width="1.2" height="3.8" fill="#b01a10"/><rect x="800.5" y="195.4" width="1.0" height="5.6" fill="#b01a10"/><rect x="816.0" y="177.5" width="1.2" height="23.5" fill="#9e1a0c" fill-opacity="0.7"/><rect x="817.2" y="177.5" width="2.3" height="23.5" fill="#b01a10"/><rect x="822.0" y="164.3" width="1.2" height="36.7" fill="#9e1a0c" fill-opacity="0.6"/><rect x="823.2" y="171.9" width="2.1" height="29.1" fill="#b01a10"/><rect x="825.3" y="155.9" width="1.0" height="45.1" fill="#9e1a0c" fill-opacity="0.6"/><rect x="826.3" y="175.2" width="1.5" height="25.9" fill="#b01a10"/><rect x="846.8" y="196.3" width="0.8" height="4.7" fill="#9e1a0c" fill-opacity="0.6"/><rect x="854.3" y="179.8" width="1.0" height="21.2" fill="#9e1a0c" fill-opacity="0.7"/><rect x="868.0" y="196.3" width="1.2" height="4.7" fill="#9e1a0c" fill-opacity="0.6"/><rect x="871.3" y="186.9" width="2.3" height="14.1" fill="#b01a10"/><rect x="875.0" y="158.7" width="1.0" height="42.3" fill="#9e1a0c" fill-opacity="0.5"/><rect x="876.5" y="155.9" width="3.5" height="45.1" fill="#9e1a0c" fill-opacity="0.62"/><rect x="880.0" y="174.7" width="2.0" height="26.3" fill="#9e1a0c" fill-opacity="0.62"/><rect x="878.0" y="197.2" width="1.5" height="3.8" fill="#b01a10"/><rect x="998.5" y="162.5" width="1.5" height="38.5" fill="#9e1a0c" fill-opacity="0.75"/><rect x="1005.5" y="154.0" width="1.3" height="47.0" fill="#9e1a0c" fill-opacity="0.5"/><rect x="1003.5" y="198.2" width="1.5" height="2.8" fill="#b01a10"/><rect x="1011.0" y="154.0" width="1.0" height="47.0" fill="#9e1a0c" fill-opacity="0.8"/><rect x="1013.5" y="154.0" width="2.7" height="47.0" fill="#b01a10"/><rect x="1016.2" y="179.8" width="1.1" height="21.2" fill="#b01a10"/><rect x="1017.3" y="195.4" width="1.0" height="5.6" fill="#b01a10"/><rect x="1012.5" y="196.3" width="1.0" height="4.7" fill="#b01a10"/></svg>
<div class="a" style="left:540px;top:206.5px;width:49.2px;height:23.7px;border-radius:6px;background:#2a2a27"></div>
<div class="a" style="left:548.4px;top:214.5px;width:6.6px;height:6.6px;border-radius:50%;background:#f0c23c;box-shadow:0 0 4px 1px rgba(240,194,60,.5)"></div>
<div class="t" style="top:214.00px;font-size:10.6px;color:#fff;letter-spacing:-0.210px;font-weight:bold;left:564.10px;">BB</div>
<div class="a" style="left:949.6px;top:206.8px;width:84px;height:28.9px;border-radius:11.5px;border:1px solid #373a42;background:#1a1b20"></div>
<div class="t" style="left:958.4px;top:214.0px;font-size:16.5px;color:#e0405f;font-family:'DejaVu Sans',sans-serif">&#9829;</div>
<div class="t" style="left:970.4px;top:214.3px;font-size:18px;color:#5b78e6;font-family:'DejaVu Sans',sans-serif">&#9830;</div>
<div class="t" style="left:984.0px;top:215.1px;font-size:16.5px;color:#6a9a22;font-family:'DejaVu Sans',sans-serif">&#9827;</div>
<div class="t" style="left:997.0px;top:212.6px;font-size:18px;color:#3a3d46;-webkit-text-stroke:.7px #74767e;font-family:'DejaVu Sans',sans-serif">&#9824;</div>
<svg class="a" style="left:1014.600px;top:218.6px" width="8" height="7" viewBox="0 0 8 7"><path d="M.4 .5 H6.6 L3.5 5.4 Z" fill="#5ec4b6"/></svg>
<div class="chip" style="left:543px;top:245px;width:113.6px;height:25.5px;border-color:#47201d"></div>
<div class="a" style="left:593.4px;top:245px;width:1px;height:25.5px;background:#47201d"></div>
<div class="a" style="left:549.4px;top:255.1px;width:5px;height:5px;border-radius:50%;background:#9e1a0c"></div>
<div class="t" style="top:254.00px;font-size:11.9px;color:#f0f0f3;letter-spacing:0.549px;-webkit-text-stroke:0.25px #f0f0f3;left:558.40px;">All In</div>
<div class="t" style="top:254.00px;font-size:11.9px;color:#fff;letter-spacing:-0.608px;-webkit-text-stroke:0.4px #fff;left:600.80px;">3.4%</div>
<div class="t" style="top:254.00px;font-size:11.9px;color:#8f9199;letter-spacing:-0.188px;left:629.80px;">(21)</div>
<div class="chip" style="left:542.7px;top:277.1px;width:146.1px;height:26.4px;border-color:#5b3f72"></div>
<div class="a" style="left:620.0px;top:277.1px;width:1px;height:26.4px;background:#5b3f72"></div>
<div class="a" style="left:549.1px;top:287.20000000000005px;width:5px;height:5px;border-radius:50%;background:#a862c8"></div>
<div class="t" style="top:286.00px;font-size:11.9px;color:#f0f0f3;letter-spacing:-0.181px;-webkit-text-stroke:0.25px #f0f0f3;left:558.10px;">Raise 50%</div>
<div class="t" style="top:286.00px;font-size:11.9px;color:#fff;letter-spacing:-0.700px;-webkit-text-stroke:0.4px #fff;left:628.00px;">12.2%</div>
<div class="t" style="top:286.00px;font-size:11.9px;color:#8f9199;letter-spacing:-0.054px;left:662.00px;">(73)</div>
<div class="chip" style="left:695px;top:277.1px;width:116.8px;height:26.4px;border-color:#1d5a52"></div>
<div class="a" style="left:735.7px;top:277.1px;width:1px;height:26.4px;background:#1d5a52"></div>
<div class="a" style="left:701.4px;top:287.20000000000005px;width:5px;height:5px;border-radius:50%;background:#128c7d"></div>
<div class="t" style="top:286.00px;font-size:11.9px;color:#f0f0f3;letter-spacing:-0.334px;-webkit-text-stroke:0.25px #f0f0f3;left:710.40px;">Call</div>
<div class="t" style="top:286.00px;font-size:11.9px;color:#fff;letter-spacing:-0.511px;-webkit-text-stroke:0.4px #fff;left:743.30px;">52.0%</div>
<div class="t" style="top:286.00px;font-size:11.9px;color:#8f9199;letter-spacing:-0.445px;left:779.50px;">(313)</div>
<div class="chip" style="left:817.5px;top:277.1px;width:120.8px;height:26.4px;border-color:#4a4c52"></div>
<div class="a" style="left:862.8px;top:277.1px;width:1px;height:26.4px;background:#4a4c52"></div>
<div class="a" style="left:823.9px;top:287.20000000000005px;width:5px;height:5px;border-radius:50%;background:#8d8d8d"></div>
<div class="t" style="top:286.00px;font-size:11.9px;color:#f0f0f3;letter-spacing:0.117px;-webkit-text-stroke:0.25px #f0f0f3;left:832.90px;">Fold</div>
<div class="t" style="top:286.00px;font-size:11.9px;color:#fff;letter-spacing:-0.700px;-webkit-text-stroke:0.4px #fff;left:870.00px;">32.3%</div>
<div class="t" style="top:286.00px;font-size:11.9px;color:#8f9199;letter-spacing:-0.245px;left:905.00px;">(195)</div>
<div class="a" style="left:540px;top:313px;width:493.500px;height:4.5px;border-radius:2.5px;overflow:hidden;background:#8d8d8d"><i class="a" style="left:0;top:0;bottom:0;width:3.4%;background:#9e1a0c"></i><i class="a" style="left:3.4%;top:0;bottom:0;width:12.2%;background:#a862c8"></i><i class="a" style="left:15.6%;top:0;bottom:0;width:52%;background:#128c7d"></i></div>
<div class="a" style="left:540px;top:324px;width:492px;height:314px;border-radius:5px;overflow:hidden;background:#15161a">
<div class="cell" style="left:0px;top:0px;width:37px;height:23px;line-height:23px;background:#2a2d35;color:#e6e6ea;border-radius:1.5px;box-shadow:0 0 0 1px #24262d"><span>AA</span></div>
<div class="cell" style="left:38px;top:0px;width:37px;height:23px;line-height:23px;background:#2a2d35;color:#e6e6ea;border-radius:1.5px;box-shadow:0 0 0 1px #24262d"><span>AKs</span></div>
<div class="cell" style="left:76px;top:0px;width:37px;height:23px;line-height:23px;background:#128c7d;color:#e9f7f4;border-radius:1.5px"><i style="left:0.0px;width:1.0px;background:#9e1a0c"></i><i style="left:0.7px;width:36.6px;background:#128c7d"></i><span>AQs</span></div>
<div class="cell" style="left:114px;top:0px;width:37px;height:23px;line-height:23px;background:#128c7d;color:#e9f7f4;border-radius:1.5px"><i style="left:0.0px;width:5.8px;background:#a862c8"></i><i style="left:5.5px;width:31.8px;background:#128c7d"></i><span>AJs</span></div>
<div class="cell" style="left:152px;top:0px;width:37px;height:23px;line-height:23px;background:#128c7d;color:#e9f7f4;border-radius:1.5px"><i style="left:0.0px;width:17.0px;background:#9e1a0c"></i><i style="left:16.7px;width:12.5px;background:#a862c8"></i><i style="left:28.9px;width:8.4px;background:#128c7d"></i><span>ATs</span></div>
<div class="cell" style="left:190px;top:0px;width:37px;height:23px;line-height:23px;background:#128c7d;color:#e9f7f4;border-radius:1.5px"><i style="left:0.0px;width:37.3px;background:#128c7d"></i><span>A9s</span></div>
<div class="cell" style="left:228px;top:0px;width:37px;height:23px;line-height:23px;background:#128c7d;color:#e9f7f4;border-radius:1.5px"><i style="left:0.0px;width:9.6px;background:#a862c8"></i><i style="left:9.2px;width:23.2px;background:#128c7d"></i><i style="left:32.2px;width:5.1px;background:#8d8d8d"></i><span>A8s</span></div>
<div class="cell" style="left:266px;top:0px;width:37px;height:23px;line-height:23px;background:#128c7d;color:#e9f7f4;border-radius:1.5px"><i style="left:0.0px;width:28.4px;background:#128c7d"></i><i style="left:28.1px;width:9.2px;background:#8d8d8d"></i><span>A7s</span></div>
<div class="cell" style="left:304px;top:0px;width:37px;height:23px;line-height:23px;background:#128c7d;color:#e9f7f4;border-radius:1.5px"><i style="left:0.0px;width:28.4px;background:#128c7d"></i><i style="left:28.1px;width:9.2px;background:#8d8d8d"></i><span>A6s</span></div>
<div class="cell" style="left:342px;top:0px;width:37px;height:23px;line-height:23px;background:#128c7d;color:#e9f7f4;border-radius:1.5px"><i style="left:0.0px;width:2.9px;background:#a862c8"></i><i style="left:2.6px;width:25.5px;background:#128c7d"></i><i style="left:27.8px;width:9.6px;background:#8d8d8d"></i><span>A5s</span></div>
<div class="cell" style="left:380px;top:0px;width:36px;height:23px;line-height:23px;background:#128c7d;color:#e9f7f4;border-radius:1.5px"><i style="left:0.0px;width:20.5px;background:#a862c8"></i><i style="left:20.2px;width:7.1px;background:#128c7d"></i><i style="left:27.0px;width:9.3px;background:#8d8d8d"></i><span>A4s</span></div>
<div class="cell" style="left:417px;top:0px;width:37px;height:23px;line-height:23px;background:#128c7d;color:#e9f7f4;border-radius:1.5px"><i style="left:0.0px;width:19.9px;background:#a862c8"></i><i style="left:19.6px;width:8.4px;background:#128c7d"></i><i style="left:27.8px;width:9.6px;background:#8d8d8d"></i><span>A3s</span></div>
<div class="cell" style="left:455px;top:0px;width:37px;height:23px;line-height:23px;background:#128c7d;color:#e9f7f4;border-radius:1.5px"><i style="left:0.0px;width:37.3px;background:#128c7d"></i><span>A2s</span></div>
<div class="cell" style="left:0px;top:24px;width:37px;height:23px;line-height:23px;background:#2a2d35;color:#e6e6ea;border-radius:1.5px;box-shadow:0 0 0 1px #24262d"><span>AKo</span></div>
<div class="cell" style="left:38px;top:24px;width:37px;height:23px;line-height:23px;background:#2a2d35;color:#e6e6ea;border-radius:1.5px;box-shadow:0 0 0 1px #24262d"><span>KK</span></div>
<div class="cell" style="left:76px;top:24px;width:37px;height:23px;line-height:23px;background:#128c7d;color:#e9f7f4;border-radius:1.5px"><i style="left:0.0px;width:1.0px;background:#9e1a0c"></i><i style="left:0.7px;width:36.6px;background:#a862c8"></i><span>KQs</span></div>
<div class="cell" style="left:114px;top:24px;width:37px;height:23px;line-height:23px;background:#128c7d;color:#e9f7f4;border-radius:1.5px"><i style="left:0.0px;width:14.0px;background:#a862c8"></i><i style="left:13.7px;width:23.6px;background:#128c7d"></i><span>KJs</span></div>
<div class="cell" style="left:152px;top:24px;width:37px;height:23px;line-height:23px;background:#128c7d;color:#e9f7f4;border-radius:1.5px"><i style="left:0.0px;width:11.8px;background:#a862c8"></i><i style="left:11.5px;width:25.8px;background:#128c7d"></i><span>KTs</span></div>
<div class="cell" style="left:190px;top:24px;width:37px;height:23px;line-height:23px;background:#128c7d;color:#e9f7f4;border-radius:1.5px"><i style="left:0.0px;width:9.2px;background:#a862c8"></i><i style="left:8.9px;width:28.4px;background:#128c7d"></i><span>K9s</span></div>
<div class="cell" style="left:228px;top:24px;width:37px;height:23px;line-height:23px;background:#128c7d;color:#e9f7f4;border-radius:1.5px"><i style="left:0.0px;width:4.7px;background:#a862c8"></i><i style="left:4.4px;width:23.6px;background:#128c7d"></i><i style="left:27.8px;width:9.6px;background:#8d8d8d"></i><span>K8s</span></div>
<div class="cell" style="left:266px;top:24px;width:37px;height:23px;line-height:23px;background:#128c7d;color:#e9f7f4;border-radius:1.5px"><i style="left:0.0px;width:6.2px;background:#a862c8"></i><i style="left:5.9px;width:22.5px;background:#128c7d"></i><i style="left:28.1px;width:9.2px;background:#8d8d8d"></i><span>K7s</span></div>
<div class="cell" style="left:304px;top:24px;width:37px;height:23px;line-height:23px;background:#128c7d;color:#e9f7f4;border-radius:1.5px"><i style="left:0.0px;width:37.3px;background:#8d8d8d"></i><span>K6s</span></div>
<div class="cell" style="left:342px;top:24px;width:37px;height:23px;line-height:23px;background:#128c7d;color:#e9f7f4;border-radius:1.5px"><i style="left:0.0px;width:5.5px;background:#a862c8"></i><i style="left:5.2px;width:11.0px;background:#128c7d"></i><i style="left:15.9px;width:21.4px;background:#8d8d8d"></i><span>K5s</span></div>
<div class="cell" style="left:380px;top:24px;width:36px;height:23px;line-height:23px;background:#128c7d;color:#e9f7f4;border-radius:1.5px"><i style="left:0.0px;width:11.8px;background:#a862c8"></i><i style="left:11.5px;width:15.8px;background:#128c7d"></i><i style="left:27.0px;width:9.3px;background:#8d8d8d"></i><span>K4s</span></div>
<div class="cell" style="left:417px;top:24px;width:37px;height:23px;line-height:23px;background:#128c7d;color:#e9f7f4;border-radius:1.5px"><i style="left:0.0px;width:12.9px;background:#a862c8"></i><i style="left:12.6px;width:15.5px;background:#128c7d"></i><i style="left:27.8px;width:9.6px;background:#8d8d8d"></i><span>K3s</span></div>
<div class="cell" style="left:455px;top:24px;width:37px;height:23px;line-height:23px;background:#128c7d;color:#e9f7f4;border-radius:1.5px"><i style="left:0.0px;width:37.3px;background:#128c7d"></i><span>K2s</span></div>
<div class="cell" style="left:0px;top:48px;width:37px;height:24px;line-height:24px;background:#128c7d;color:#e9f7f4;border-radius:1.5px"><i style="left:0.0px;width:0.7px;background:#a862c8"></i><i style="left:0.4px;width:36.9px;background:#128c7d"></i><span>AQo</span></div>
<div class="cell" style="left:38px;top:48px;width:37px;height:24px;line-height:24px;background:#128c7d;color:#e9f7f4;border-radius:1.5px"><i style="left:0.0px;width:19.5px;background:#9e1a0c"></i><i style="left:19.2px;width:5.1px;background:#a862c8"></i><i style="left:24.1px;width:13.2px;background:#128c7d"></i><span>KQo</span></div>
<div class="cell" style="left:76px;top:48px;width:37px;height:24px;line-height:24px;background:#2a2d35;color:#e6e6ea;border-radius:1.5px;box-shadow:0 0 0 1px #24262d"><span>QQ</span></div>
<div class="cell" style="left:114px;top:48px;width:37px;height:24px;line-height:24px;background:#128c7d;color:#e9f7f4;border-radius:1.5px"><i style="left:0.0px;width:26.2px;background:#a862c8"></i><i style="left:25.9px;width:11.4px;background:#128c7d"></i><span>QJs</span></div>
<div class="cell" style="left:152px;top:48px;width:37px;height:24px;line-height:24px;background:#128c7d;color:#e9f7f4;border-radius:1.5px"><i style="left:0.0px;width:4.7px;background:#9e1a0c"></i><i style="left:4.4px;width:21.4px;background:#a862c8"></i><i style="left:25.5px;width:11.8px;background:#128c7d"></i><span>QTs</span></div>
<div class="cell" style="left:190px;top:48px;width:37px;height:24px;line-height:24px;background:#128c7d;color:#e9f7f4;border-radius:1.5px"><i style="left:0.0px;width:5.8px;background:#a862c8"></i><i style="left:5.5px;width:31.8px;background:#128c7d"></i><span>Q9s</span></div>
<div class="cell" style="left:228px;top:48px;width:37px;height:24px;line-height:24px;background:#128c7d;color:#e9f7f4;border-radius:1.5px"><i style="left:0.0px;width:12.1px;background:#a862c8"></i><i style="left:11.8px;width:25.5px;background:#128c7d"></i><span>Q8s</span></div>
<div class="cell" style="left:266px;top:48px;width:37px;height:24px;line-height:24px;background:#128c7d;color:#e9f7f4;border-radius:1.5px"><i style="left:0.0px;width:28.4px;background:#128c7d"></i><i style="left:28.1px;width:9.2px;background:#8d8d8d"></i><span>Q7s</span></div>
<div class="cell" style="left:304px;top:48px;width:37px;height:24px;line-height:24px;background:#128c7d;color:#e9f7f4;border-radius:1.5px"><i style="left:0.0px;width:3.3px;background:#128c7d"></i><i style="left:3.0px;width:34.3px;background:#8d8d8d"></i><span>Q6s</span></div>
<div class="cell" style="left:342px;top:48px;width:37px;height:24px;line-height:24px;background:#128c7d;color:#e9f7f4;border-radius:1.5px"><i style="left:0.0px;width:6.2px;background:#128c7d"></i><i style="left:5.9px;width:31.4px;background:#8d8d8d"></i><span>Q5s</span></div>
<div class="cell" style="left:380px;top:48px;width:36px;height:24px;line-height:24px;background:#128c7d;color:#e9f7f4;border-radius:1.5px"><i style="left:0.0px;width:14.3px;background:#a862c8"></i><i style="left:14.0px;width:13.3px;background:#128c7d"></i><i style="left:27.0px;width:9.3px;background:#8d8d8d"></i><span>Q4s</span></div>
<div class="cell" style="left:417px;top:48px;width:37px;height:24px;line-height:24px;background:#128c7d;color:#e9f7f4;border-radius:1.5px"><i style="left:0.0px;width:12.9px;background:#a862c8"></i><i style="left:12.6px;width:15.5px;background:#128c7d"></i><i style="left:27.8px;width:9.6px;background:#8d8d8d"></i><span>Q3s</span></div>
<div class="cell" style="left:455px;top:48px;width:37px;height:24px;line-height:24px;background:#128c7d;color:#e9f7f4;border-radius:1.5px"><i style="left:0.0px;width:37.3px;background:#128c7d"></i><span>Q2s</span></div>
<div class="cell" style="left:0px;top:73px;width:37px;height:23px;line-height:23px;background:#128c7d;color:#e9f7f4;border-radius:1.5px"><i style="left:0.0px;width:2.1px;background:#a862c8"></i><i style="left:1.9px;width:35.4px;background:#128c7d"></i><span>AJo</span></div>
<div class="cell" style="left:38px;top:73px;width:37px;height:23px;line-height:23px;background:#128c7d;color:#e9f7f4;border-radius:1.5px"><i style="left:0.0px;width:0.7px;background:#a862c8"></i><i style="left:0.4px;width:36.9px;background:#128c7d"></i><span>KJo</span></div>
<div class="cell" style="left:76px;top:73px;width:37px;height:23px;line-height:23px;background:#128c7d;color:#e9f7f4;border-radius:1.5px"><i style="left:0.0px;width:15.8px;background:#9e1a0c"></i><i style="left:15.5px;width:21.8px;background:#128c7d"></i><span>QJo</span></div>
<div class="cell" style="left:114px;top:73px;width:37px;height:23px;line-height:23px;background:#2a2d35;color:#e6e6ea;border-radius:1.5px;box-shadow:0 0 0 1px #24262d"><span>JJ</span></div>
<div class="cell" style="left:152px;top:73px;width:37px;height:23px;line-height:23px;background:#128c7d;color:#e9f7f4;border-radius:1.5px"><i style="left:0.0px;width:29.2px;background:#a862c8"></i><i style="left:28.9px;width:8.4px;background:#128c7d"></i><span>JTs</span></div>
<div class="cell" style="left:190px;top:73px;width:37px;height:23px;line-height:23px;background:#128c7d;color:#e9f7f4;border-radius:1.5px"><i style="left:0.0px;width:13.6px;background:#a862c8"></i><i style="left:13.3px;width:24.0px;background:#128c7d"></i><span>J9s</span></div>
<div class="cell" style="left:228px;top:73px;width:37px;height:23px;line-height:23px;background:#128c7d;color:#e9f7f4;border-radius:1.5px"><i style="left:0.0px;width:13.2px;background:#a862c8"></i><i style="left:12.9px;width:24.4px;background:#128c7d"></i><span>J8s</span></div>
<div class="cell" style="left:266px;top:73px;width:37px;height:23px;line-height:23px;background:#128c7d;color:#e9f7f4;border-radius:1.5px"><i style="left:0.0px;width:15.5px;background:#a862c8"></i><i style="left:15.2px;width:22.1px;background:#128c7d"></i><span>J7s</span></div>
<div class="cell" style="left:304px;top:73px;width:37px;height:23px;line-height:23px;background:#128c7d;color:#e9f7f4;border-radius:1.5px"><i style="left:0.0px;width:37.3px;background:#8d8d8d"></i><span>J6s</span></div>
<div class="cell" style="left:342px;top:73px;width:37px;height:23px;line-height:23px;background:#128c7d;color:#e9f7f4;border-radius:1.5px"><i style="left:0.0px;width:25.5px;background:#128c7d"></i><i style="left:25.2px;width:12.1px;background:#8d8d8d"></i><span>J5s</span></div>
<div class="cell" style="left:380px;top:73px;width:36px;height:23px;line-height:23px;background:#128c7d;color:#e9f7f4;border-radius:1.5px"><i style="left:0.0px;width:8.9px;background:#a862c8"></i><i style="left:8.6px;width:18.7px;background:#128c7d"></i><i style="left:27.0px;width:9.3px;background:#8d8d8d"></i><span>J4s</span></div>
<div class="cell" style="left:417px;top:73px;width:37px;height:23px;line-height:23px;background:#128c7d;color:#e9f7f4;border-radius:1.5px"><i style="left:0.0px;width:8.1px;background:#a862c8"></i><i style="left:7.8px;width:20.3px;background:#128c7d"></i><i style="left:27.8px;width:9.6px;background:#8d8d8d"></i><span>J3s</span></div>
<div class="cell" style="left:455px;top:73px;width:37px;height:23px;line-height:23px;background:#128c7d;color:#e9f7f4;border-radius:1.5px"><i style="left:0.0px;width:8.4px;background:#a862c8"></i><i style="left:8.1px;width:29.2px;background:#128c7d"></i><span>J2s</span></div>
<div class="cell" style="left:0px;top:97px;width:37px;height:23px;line-height:23px;background:#128c7d;color:#e9f7f4;border-radius:1.5px"><i style="left:0.0px;width:31.8px;background:#9e1a0c"></i><i style="left:31.4px;width:4.7px;background:#a862c8"></i><i style="left:35.9px;width:1.4px;background:#128c7d"></i><span>ATo</span></div>
<div class="cell" style="left:38px;top:97px;width:37px;height:23px;line-height:23px;background:#128c7d;color:#e9f7f4;border-radius:1.5px"><i style="left:0.0px;width:5.5px;background:#a862c8"></i><i style="left:5.2px;width:32.1px;background:#128c7d"></i><span>KTo</span></div>
<div class="cell" style="left:76px;top:97px;width:37px;height:23px;line-height:23px;background:#128c7d;color:#e9f7f4;border-radius:1.5px"><i style="left:0.0px;width:11.4px;background:#9e1a0c"></i><i style="left:11.1px;width:10.3px;background:#a862c8"></i><i style="left:21.1px;width:16.2px;background:#128c7d"></i><span>QTo</span></div>
<div class="cell" style="left:114px;top:97px;width:37px;height:23px;line-height:23px;background:#128c7d;color:#e9f7f4;border-radius:1.5px"><i style="left:0.0px;width:5.1px;background:#a862c8"></i><i style="left:4.8px;width:32.5px;background:#128c7d"></i><span>JTo</span></div>
<div class="cell" style="left:152px;top:97px;width:37px;height:23px;line-height:23px;background:#128c7d;color:#e9f7f4;border-radius:1.5px"><i style="left:0.0px;width:37.3px;background:#a862c8"></i><span>TT</span></div>
<div class="cell" style="left:190px;top:97px;width:37px;height:23px;line-height:23px;background:#128c7d;color:#e9f7f4;border-radius:1.5px"><i style="left:0.0px;width:21.8px;background:#a862c8"></i><i style="left:21.5px;width:15.8px;background:#128c7d"></i><span>T9s</span></div>
<div class="cell" style="left:228px;top:97px;width:37px;height:23px;line-height:23px;background:#128c7d;color:#e9f7f4;border-radius:1.5px"><i style="left:0.0px;width:21.8px;background:#a862c8"></i><i style="left:21.5px;width:15.8px;background:#128c7d"></i><span>T8s</span></div>
<div class="cell" style="left:266px;top:97px;width:37px;height:23px;line-height:23px;background:#128c7d;color:#e9f7f4;border-radius:1.5px"><i style="left:0.0px;width:37.3px;background:#128c7d"></i><span>T7s</span></div>
<div class="cell" style="left:304px;top:97px;width:37px;height:23px;line-height:23px;background:#128c7d;color:#e9f7f4;border-radius:1.5px"><i style="left:0.0px;width:37.3px;background:#128c7d"></i><span>T6s</span></div>
<div class="cell" style="left:342px;top:97px;width:37px;height:23px;line-height:23px;background:#128c7d;color:#e9f7f4;border-radius:1.5px"><i style="left:0.0px;width:37.3px;background:#128c7d"></i><span>T5s</span></div>
<div class="cell" style="left:380px;top:97px;width:36px;height:23px;line-height:23px;background:#128c7d;color:#e9f7f4;border-radius:1.5px"><i style="left:0.0px;width:2.8px;background:#a862c8"></i><i style="left:2.5px;width:33.8px;background:#128c7d"></i><span>T4s</span></div>
<div class="cell" style="left:417px;top:97px;width:37px;height:23px;line-height:23px;background:#128c7d;color:#e9f7f4;border-radius:1.5px"><i style="left:0.0px;width:2.9px;background:#a862c8"></i><i style="left:2.6px;width:34.7px;background:#128c7d"></i><span>T3s</span></div>
<div class="cell" style="left:455px;top:97px;width:37px;height:23px;line-height:23px;background:#128c7d;color:#e9f7f4;border-radius:1.5px"><i style="left:0.0px;width:37.3px;background:#128c7d"></i><span>T2s</span></div>
<div class="cell" style="left:0px;top:121px;width:37px;height:23px;line-height:23px;background:#128c7d;color:#e9f7f4;border-radius:1.5px"><i style="left:0.0px;width:37.3px;background:#128c7d"></i><span>A9o</span></div>
<div class="cell" style="left:38px;top:121px;width:37px;height:23px;line-height:23px;background:#128c7d;color:#e9f7f4;border-radius:1.5px"><i style="left:0.0px;width:37.3px;background:#128c7d"></i><span>K9o</span></div>
<div class="cell" style="left:76px;top:121px;width:37px;height:23px;line-height:23px;background:#128c7d;color:#e9f7f4;border-radius:1.5px"><i style="left:0.0px;width:4.7px;background:#a862c8"></i><i style="left:4.4px;width:32.9px;background:#128c7d"></i><span>Q9o</span></div>
<div class="cell" style="left:114px;top:121px;width:37px;height:23px;line-height:23px;background:#128c7d;color:#e9f7f4;border-radius:1.5px"><i style="left:0.0px;width:3.6px;background:#a862c8"></i><i style="left:3.3px;width:34.0px;background:#128c7d"></i><span>J9o</span></div>
<div class="cell" style="left:152px;top:121px;width:37px;height:23px;line-height:23px;background:#128c7d;color:#e9f7f4;border-radius:1.5px"><i style="left:0.0px;width:24.7px;background:#a862c8"></i><i style="left:24.4px;width:12.9px;background:#128c7d"></i><span>T9o</span></div>
<div class="cell" style="left:190px;top:121px;width:37px;height:23px;line-height:23px;background:#128c7d;color:#e9f7f4;border-radius:1.5px"><i style="left:0.0px;width:30.3px;background:#a862c8"></i><i style="left:30.0px;width:7.3px;background:#128c7d"></i><span>99</span></div>
<div class="cell" style="left:228px;top:121px;width:37px;height:23px;line-height:23px;background:#128c7d;color:#e9f7f4;border-radius:1.5px"><i style="left:0.0px;width:2.1px;background:#a862c8"></i><i style="left:1.9px;width:35.4px;background:#128c7d"></i><span>98s</span></div>
<div class="cell" style="left:266px;top:121px;width:37px;height:23px;line-height:23px;background:#128c7d;color:#e9f7f4;border-radius:1.5px"><i style="left:0.0px;width:37.3px;background:#128c7d"></i><span>97s</span></div>
<div class="cell" style="left:304px;top:121px;width:37px;height:23px;line-height:23px;background:#128c7d;color:#e9f7f4;border-radius:1.5px"><i style="left:0.0px;width:37.3px;background:#128c7d"></i><span>96s</span></div>
<div class="cell" style="left:342px;top:121px;width:37px;height:23px;line-height:23px;background:#128c7d;color:#e9f7f4;border-radius:1.5px"><i style="left:0.0px;width:37.3px;background:#128c7d"></i><span>95s</span></div>
<div class="cell" style="left:380px;top:121px;width:36px;height:23px;line-height:23px;background:#128c7d;color:#e9f7f4;border-radius:1.5px"><i style="left:0.0px;width:36.3px;background:#128c7d"></i><span>94s</span></div>
<div class="cell" style="left:417px;top:121px;width:37px;height:23px;line-height:23px;background:#128c7d;color:#e9f7f4;border-radius:1.5px"><i style="left:0.0px;width:37.3px;background:#128c7d"></i><span>93s</span></div>
<div class="cell" style="left:455px;top:121px;width:37px;height:23px;line-height:23px;background:#128c7d;color:#e9f7f4;border-radius:1.5px"><i style="left:0.0px;width:37.3px;background:#a862c8"></i><span>92s</span></div>
<div class="cell" style="left:0px;top:145px;width:37px;height:24px;line-height:24px;background:#128c7d;color:#e9f7f4;border-radius:1.5px"><i style="left:0.0px;width:37.3px;background:#8d8d8d"></i><span>A8o</span></div>
<div class="cell" style="left:38px;top:145px;width:37px;height:24px;line-height:24px;background:#128c7d;color:#e9f7f4;border-radius:1.5px"><i style="left:0.0px;width:37.3px;background:#8d8d8d"></i><span>K8o</span></div>
<div class="cell" style="left:76px;top:145px;width:37px;height:24px;line-height:24px;background:#128c7d;color:#e9f7f4;border-radius:1.5px"><i style="left:0.0px;width:5.5px;background:#a862c8"></i><i style="left:5.2px;width:32.1px;background:#128c7d"></i><span>Q8o</span></div>
<div class="cell" style="left:114px;top:145px;width:37px;height:24px;line-height:24px;background:#128c7d;color:#e9f7f4;border-radius:1.5px"><i style="left:0.0px;width:1.8px;background:#9e1a0c"></i><i style="left:1.5px;width:12.9px;background:#a862c8"></i><i style="left:14.1px;width:23.2px;background:#128c7d"></i><span>J8o</span></div>
<div class="cell" style="left:152px;top:145px;width:37px;height:24px;line-height:24px;background:#128c7d;color:#e9f7f4;border-radius:1.5px"><i style="left:0.0px;width:9.6px;background:#a862c8"></i><i style="left:9.2px;width:28.1px;background:#128c7d"></i><span>T8o</span></div>
<div class="cell" style="left:190px;top:145px;width:37px;height:24px;line-height:24px;background:#128c7d;color:#e9f7f4;border-radius:1.5px"><i style="left:0.0px;width:1.8px;background:#a862c8"></i><i style="left:1.5px;width:35.8px;background:#128c7d"></i><span>98o</span></div>
<div class="cell" style="left:228px;top:145px;width:37px;height:24px;line-height:24px;background:#128c7d;color:#e9f7f4;border-radius:1.5px"><i style="left:0.0px;width:37.3px;background:#128c7d"></i><span>88</span></div>
<div class="cell" style="left:266px;top:145px;width:37px;height:24px;line-height:24px;background:#128c7d;color:#e9f7f4;border-radius:1.5px"><i style="left:0.0px;width:4.4px;background:#a862c8"></i><i style="left:4.1px;width:33.2px;background:#128c7d"></i><span>87s</span></div>
<div class="cell" style="left:304px;top:145px;width:37px;height:24px;line-height:24px;background:#128c7d;color:#e9f7f4;border-radius:1.5px"><i style="left:0.0px;width:4.0px;background:#a862c8"></i><i style="left:3.7px;width:33.6px;background:#128c7d"></i><span>86s</span></div>
<div class="cell" style="left:342px;top:145px;width:37px;height:24px;line-height:24px;background:#128c7d;color:#e9f7f4;border-radius:1.5px"><i style="left:0.0px;width:37.3px;background:#8d8d8d"></i><span>85s</span></div>
<div class="cell" style="left:380px;top:145px;width:36px;height:24px;line-height:24px;background:#128c7d;color:#e9f7f4;border-radius:1.5px"><i style="left:0.0px;width:36.3px;background:#8d8d8d"></i><span>84s</span></div>
<div class="cell" style="left:417px;top:145px;width:37px;height:24px;line-height:24px;background:#128c7d;color:#e9f7f4;border-radius:1.5px"><i style="left:0.0px;width:37.3px;background:#8d8d8d"></i><span>83s</span></div>
<div class="cell" style="left:455px;top:145px;width:37px;height:24px;line-height:24px;background:#128c7d;color:#e9f7f4;border-radius:1.5px"><i style="left:0.0px;width:9.2px;background:#a862c8"></i><i style="left:8.9px;width:28.4px;background:#128c7d"></i><span>82s</span></div>
<div class="cell" style="left:0px;top:170px;width:37px;height:23px;line-height:23px;background:#128c7d;color:#e9f7f4;border-radius:1.5px"><i style="left:0.0px;width:37.3px;background:#8d8d8d"></i><span>A7o</span></div>
<div class="cell" style="left:38px;top:170px;width:37px;height:23px;line-height:23px;background:#128c7d;color:#e9f7f4;border-radius:1.5px"><i style="left:0.0px;width:37.3px;background:#8d8d8d"></i><span>K7o</span></div>
<div class="cell" style="left:76px;top:170px;width:37px;height:23px;line-height:23px;background:#2a2d35;color:#e6e6ea;border-radius:1.5px;box-shadow:0 0 0 1px #24262d"><span>Q7o</span></div>
<div class="cell" style="left:114px;top:170px;width:37px;height:23px;line-height:23px;background:#2a2d35;color:#e6e6ea;border-radius:1.5px;box-shadow:0 0 0 1px #24262d"><span>J7o</span></div>
<div class="cell" style="left:152px;top:170px;width:37px;height:23px;line-height:23px;background:#2a2d35;color:#e6e6ea;border-radius:1.5px;box-shadow:0 0 0 1px #24262d"><span>T7o</span></div>
<div class="cell" style="left:190px;top:170px;width:37px;height:23px;line-height:23px;background:#128c7d;color:#e9f7f4;border-radius:1.5px"><i style="left:0.0px;width:37.3px;background:#128c7d"></i><span>97o</span></div>
<div class="cell" style="left:228px;top:170px;width:37px;height:23px;line-height:23px;background:#128c7d;color:#e9f7f4;border-radius:1.5px"><i style="left:0.0px;width:10.3px;background:#a862c8"></i><i style="left:10.0px;width:27.3px;background:#128c7d"></i><span>87o</span></div>
<div class="cell" style="left:266px;top:170px;width:37px;height:23px;line-height:23px;background:#128c7d;color:#e9f7f4;border-radius:1.5px"><i style="left:0.0px;width:37.3px;background:#128c7d"></i><span>77</span></div>
<div class="cell" style="left:304px;top:170px;width:37px;height:23px;line-height:23px;background:#128c7d;color:#e9f7f4;border-radius:1.5px"><i style="left:0.0px;width:16.2px;background:#a862c8"></i><i style="left:15.9px;width:21.4px;background:#128c7d"></i><span>76s</span></div>
<div class="cell" style="left:342px;top:170px;width:37px;height:23px;line-height:23px;background:#128c7d;color:#e9f7f4;border-radius:1.5px"><i style="left:0.0px;width:37.3px;background:#8d8d8d"></i><span>75s</span></div>
<div class="cell" style="left:380px;top:170px;width:36px;height:23px;line-height:23px;background:#128c7d;color:#e9f7f4;border-radius:1.5px"><i style="left:0.0px;width:36.3px;background:#8d8d8d"></i><span>74s</span></div>
<div class="cell" style="left:417px;top:170px;width:37px;height:23px;line-height:23px;background:#128c7d;color:#e9f7f4;border-radius:1.5px"><i style="left:0.0px;width:37.3px;background:#8d8d8d"></i><span>73s</span></div>
<div class="cell" style="left:455px;top:170px;width:37px;height:23px;line-height:23px;background:#128c7d;color:#e9f7f4;border-radius:1.5px"><i style="left:0.0px;width:10.3px;background:#a862c8"></i><i style="left:10.0px;width:27.3px;background:#128c7d"></i><span>72s</span></div>
<div class="cell" style="left:0px;top:194px;width:37px;height:23px;line-height:23px;background:#128c7d;color:#e9f7f4;border-radius:1.5px"><i style="left:0.0px;width:37.3px;background:#8d8d8d"></i><span>A6o</span></div>
<div class="cell" style="left:38px;top:194px;width:37px;height:23px;line-height:23px;background:#128c7d;color:#e9f7f4;border-radius:1.5px"><i style="left:0.0px;width:37.3px;background:#8d8d8d"></i><span>K6o</span></div>
<div class="cell" style="left:76px;top:194px;width:37px;height:23px;line-height:23px;background:#2a2d35;color:#e6e6ea;border-radius:1.5px;box-shadow:0 0 0 1px #24262d"><span>Q6o</span></div>
<div class="cell" style="left:114px;top:194px;width:37px;height:23px;line-height:23px;background:#2a2d35;color:#e6e6ea;border-radius:1.5px;box-shadow:0 0 0 1px #24262d"><span>J6o</span></div>
<div class="cell" style="left:152px;top:194px;width:37px;height:23px;line-height:23px;background:#2a2d35;color:#e6e6ea;border-radius:1.5px;box-shadow:0 0 0 1px #24262d"><span>T6o</span></div>
<div class="cell" style="left:190px;top:194px;width:37px;height:23px;line-height:23px;background:#2a2d35;color:#e6e6ea;border-radius:1.5px;box-shadow:0 0 0 1px #24262d"><span>96o</span></div>
<div class="cell" style="left:228px;top:194px;width:37px;height:23px;line-height:23px;background:#128c7d;color:#e9f7f4;border-radius:1.5px"><i style="left:0.0px;width:37.3px;background:#128c7d"></i><span>86o</span></div>
<div class="cell" style="left:266px;top:194px;width:37px;height:23px;line-height:23px;background:#128c7d;color:#e9f7f4;border-radius:1.5px"><i style="left:0.0px;width:37.3px;background:#128c7d"></i><span>76o</span></div>
<div class="cell" style="left:304px;top:194px;width:37px;height:23px;line-height:23px;background:#128c7d;color:#e9f7f4;border-radius:1.5px"><i style="left:0.0px;width:37.3px;background:#128c7d"></i><span>66</span></div>
<div class="cell" style="left:342px;top:194px;width:37px;height:23px;line-height:23px;background:#128c7d;color:#e9f7f4;border-radius:1.5px"><i style="left:0.0px;width:37.3px;background:#8d8d8d"></i><span>65s</span></div>
<div class="cell" style="left:380px;top:194px;width:36px;height:23px;line-height:23px;background:#128c7d;color:#e9f7f4;border-radius:1.5px"><i style="left:0.0px;width:36.3px;background:#8d8d8d"></i><span>64s</span></div>
<div class="cell" style="left:417px;top:194px;width:37px;height:23px;line-height:23px;background:#128c7d;color:#e9f7f4;border-radius:1.5px"><i style="left:0.0px;width:37.3px;background:#8d8d8d"></i><span>63s</span></div>
<div class="cell" style="left:455px;top:194px;width:37px;height:23px;line-height:23px;background:#128c7d;color:#e9f7f4;border-radius:1.5px"><i style="left:0.0px;width:37.3px;background:#128c7d"></i><span>62s</span></div>
<div class="cell" style="left:0px;top:218px;width:37px;height:23px;line-height:23px;background:#128c7d;color:#e9f7f4;border-radius:1.5px"><i style="left:0.0px;width:37.3px;background:#8d8d8d"></i><span>A5o</span></div>
<div class="cell" style="left:38px;top:218px;width:37px;height:23px;line-height:23px;background:#128c7d;color:#e9f7f4;border-radius:1.5px"><i style="left:0.0px;width:37.3px;background:#8d8d8d"></i><span>K5o</span></div>
<div class="cell" style="left:76px;top:218px;width:37px;height:23px;line-height:23px;background:#2a2d35;color:#e6e6ea;border-radius:1.5px;box-shadow:0 0 0 1px #24262d"><span>Q5o</span></div>
<div class="cell" style="left:114px;top:218px;width:37px;height:23px;line-height:23px;background:#2a2d35;color:#e6e6ea;border-radius:1.5px;box-shadow:0 0 0 1px #24262d"><span>J5o</span></div>
<div class="cell" style="left:152px;top:218px;width:37px;height:23px;line-height:23px;background:#2a2d35;color:#e6e6ea;border-radius:1.5px;box-shadow:0 0 0 1px #24262d"><span>T5o</span></div>
<div class="cell" style="left:190px;top:218px;width:37px;height:23px;line-height:23px;background:#2a2d35;color:#e6e6ea;border-radius:1.5px;box-shadow:0 0 0 1px #24262d"><span>95o</span></div>
<div class="cell" style="left:228px;top:218px;width:37px;height:23px;line-height:23px;background:#2a2d35;color:#e6e6ea;border-radius:1.5px;box-shadow:0 0 0 1px #24262d"><span>85o</span></div>
<div class="cell" style="left:266px;top:218px;width:37px;height:23px;line-height:23px;background:#128c7d;color:#e9f7f4;border-radius:1.5px"><i style="left:0.0px;width:37.3px;background:#8d8d8d"></i><span>75o</span></div>
<div class="cell" style="left:304px;top:218px;width:37px;height:23px;line-height:23px;background:#128c7d;color:#e9f7f4;border-radius:1.5px"><i style="left:0.0px;width:37.3px;background:#8d8d8d"></i><span>65o</span></div>
<div class="cell" style="left:342px;top:218px;width:37px;height:23px;line-height:23px;background:#128c7d;color:#e9f7f4;border-radius:1.5px"><i style="left:0.0px;width:37.3px;background:#128c7d"></i><span>55</span></div>
<div class="cell" style="left:380px;top:218px;width:36px;height:23px;line-height:23px;background:#128c7d;color:#e9f7f4;border-radius:1.5px"><i style="left:0.0px;width:36.3px;background:#8d8d8d"></i><span>54s</span></div>
<div class="cell" style="left:417px;top:218px;width:37px;height:23px;line-height:23px;background:#128c7d;color:#e9f7f4;border-radius:1.5px"><i style="left:0.0px;width:37.3px;background:#8d8d8d"></i><span>53s</span></div>
<div class="cell" style="left:455px;top:218px;width:37px;height:23px;line-height:23px;background:#128c7d;color:#e9f7f4;border-radius:1.5px"><i style="left:0.0px;width:37.3px;background:#128c7d"></i><span>52s</span></div>
<div class="cell" style="left:0px;top:242px;width:37px;height:23px;line-height:23px;background:#128c7d;color:#e9f7f4;border-radius:1.5px"><i style="left:0.0px;width:37.3px;background:#8d8d8d"></i><span>A4o</span></div>
<div class="cell" style="left:38px;top:242px;width:37px;height:23px;line-height:23px;background:#2a2d35;color:#e6e6ea;border-radius:1.5px;box-shadow:0 0 0 1px #24262d"><span>K4o</span></div>
<div class="cell" style="left:76px;top:242px;width:37px;height:23px;line-height:23px;background:#2a2d35;color:#e6e6ea;border-radius:1.5px;box-shadow:0 0 0 1px #24262d"><span>Q4o</span></div>
<div class="cell" style="left:114px;top:242px;width:37px;height:23px;line-height:23px;background:#2a2d35;color:#e6e6ea;border-radius:1.5px;box-shadow:0 0 0 1px #24262d"><span>J4o</span></div>
<div class="cell" style="left:152px;top:242px;width:37px;height:23px;line-height:23px;background:#2a2d35;color:#e6e6ea;border-radius:1.5px;box-shadow:0 0 0 1px #24262d"><span>T4o</span></div>
<div class="cell" style="left:190px;top:242px;width:37px;height:23px;line-height:23px;background:#2a2d35;color:#e6e6ea;border-radius:1.5px;box-shadow:0 0 0 1px #24262d"><span>94o</span></div>
<div class="cell" style="left:228px;top:242px;width:37px;height:23px;line-height:23px;background:#2a2d35;color:#e6e6ea;border-radius:1.5px;box-shadow:0 0 0 1px #24262d"><span>84o</span></div>
<div class="cell" style="left:266px;top:242px;width:37px;height:23px;line-height:23px;background:#2a2d35;color:#e6e6ea;border-radius:1.5px;box-shadow:0 0 0 1px #24262d"><span>74o</span></div>
<div class="cell" style="left:304px;top:242px;width:37px;height:23px;line-height:23px;background:#2a2d35;color:#e6e6ea;border-radius:1.5px;box-shadow:0 0 0 1px #24262d"><span>64o</span></div>
<div class="cell" style="left:342px;top:242px;width:37px;height:23px;line-height:23px;background:#128c7d;color:#e9f7f4;border-radius:1.5px"><i style="left:0.0px;width:37.3px;background:#8d8d8d"></i><span>54o</span></div>
<div class="cell" style="left:380px;top:242px;width:36px;height:23px;line-height:23px;background:#128c7d;color:#e9f7f4;border-radius:1.5px"><i style="left:0.0px;width:2.1px;background:#a862c8"></i><i style="left:1.8px;width:34.5px;background:#128c7d"></i><span>44</span></div>
<div class="cell" style="left:417px;top:242px;width:37px;height:23px;line-height:23px;background:#128c7d;color:#e9f7f4;border-radius:1.5px"><i style="left:0.0px;width:37.3px;background:#8d8d8d"></i><span>43s</span></div>
<div class="cell" style="left:455px;top:242px;width:37px;height:23px;line-height:23px;background:#128c7d;color:#e9f7f4;border-radius:1.5px"><i style="left:0.0px;width:1.8px;background:#a862c8"></i><i style="left:1.5px;width:35.8px;background:#128c7d"></i><span>42s</span></div>
<div class="cell" style="left:0px;top:266px;width:37px;height:23px;line-height:23px;background:#128c7d;color:#e9f7f4;border-radius:1.5px"><i style="left:0.0px;width:37.3px;background:#8d8d8d"></i><span>A3o</span></div>
<div class="cell" style="left:38px;top:266px;width:37px;height:23px;line-height:23px;background:#2a2d35;color:#e6e6ea;border-radius:1.5px;box-shadow:0 0 0 1px #24262d"><span>K3o</span></div>
<div class="cell" style="left:76px;top:266px;width:37px;height:23px;line-height:23px;background:#2a2d35;color:#e6e6ea;border-radius:1.5px;box-shadow:0 0 0 1px #24262d"><span>Q3o</span></div>
<div class="cell" style="left:114px;top:266px;width:37px;height:23px;line-height:23px;background:#2a2d35;color:#e6e6ea;border-radius:1.5px;box-shadow:0 0 0 1px #24262d"><span>J3o</span></div>
<div class="cell" style="left:152px;top:266px;width:37px;height:23px;line-height:23px;background:#2a2d35;color:#e6e6ea;border-radius:1.5px;box-shadow:0 0 0 1px #24262d"><span>T3o</span></div>
<div class="cell" style="left:190px;top:266px;width:37px;height:23px;line-height:23px;background:#2a2d35;color:#e6e6ea;border-radius:1.5px;box-shadow:0 0 0 1px #24262d"><span>93o</span></div>
<div class="cell" style="left:228px;top:266px;width:37px;height:23px;line-height:23px;background:#2a2d35;color:#e6e6ea;border-radius:1.5px;box-shadow:0 0 0 1px #24262d"><span>83o</span></div>
<div class="cell" style="left:266px;top:266px;width:37px;height:23px;line-height:23px;background:#2a2d35;color:#e6e6ea;border-radius:1.5px;box-shadow:0 0 0 1px #24262d"><span>73o</span></div>
<div class="cell" style="left:304px;top:266px;width:37px;height:23px;line-height:23px;background:#2a2d35;color:#e6e6ea;border-radius:1.5px;box-shadow:0 0 0 1px #24262d"><span>63o</span></div>
<div class="cell" style="left:342px;top:266px;width:37px;height:23px;line-height:23px;background:#128c7d;color:#e9f7f4;border-radius:1.5px"><i style="left:0.0px;width:37.3px;background:#8d8d8d"></i><span>53o</span></div>
<div class="cell" style="left:380px;top:266px;width:36px;height:23px;line-height:23px;background:#2a2d35;color:#e6e6ea;border-radius:1.5px;box-shadow:0 0 0 1px #24262d"><span>43o</span></div>
<div class="cell" style="left:417px;top:266px;width:37px;height:23px;line-height:23px;background:#128c7d;color:#e9f7f4;border-radius:1.5px"><i style="left:0.0px;width:37.3px;background:#128c7d"></i><span>33</span></div>
<div class="cell" style="left:455px;top:266px;width:37px;height:23px;line-height:23px;background:#128c7d;color:#e9f7f4;border-radius:1.5px"><i style="left:0.0px;width:4.0px;background:#a862c8"></i><i style="left:3.7px;width:33.6px;background:#128c7d"></i><span>32s</span></div>
<div class="cell" style="left:0px;top:290px;width:37px;height:24px;line-height:24px;background:#2a2d35;color:#e6e6ea;border-radius:1.5px;box-shadow:0 0 0 1px #24262d"><span>A2o</span></div>
<div class="cell" style="left:38px;top:290px;width:37px;height:24px;line-height:24px;background:#2a2d35;color:#e6e6ea;border-radius:1.5px;box-shadow:0 0 0 1px #24262d"><span>K2o</span></div>
<div class="cell" style="left:76px;top:290px;width:37px;height:24px;line-height:24px;background:#2a2d35;color:#e6e6ea;border-radius:1.5px;box-shadow:0 0 0 1px #24262d"><span>Q2o</span></div>
<div class="cell" style="left:114px;top:290px;width:37px;height:24px;line-height:24px;background:#2a2d35;color:#e6e6ea;border-radius:1.5px;box-shadow:0 0 0 1px #24262d"><span>J2o</span></div>
<div class="cell" style="left:152px;top:290px;width:37px;height:24px;line-height:24px;background:#2a2d35;color:#e6e6ea;border-radius:1.5px;box-shadow:0 0 0 1px #24262d"><span>T2o</span></div>
<div class="cell" style="left:190px;top:290px;width:37px;height:24px;line-height:24px;background:#2a2d35;color:#e6e6ea;border-radius:1.5px;box-shadow:0 0 0 1px #24262d"><span>92o</span></div>
<div class="cell" style="left:228px;top:290px;width:37px;height:24px;line-height:24px;background:#2a2d35;color:#e6e6ea;border-radius:1.5px;box-shadow:0 0 0 1px #24262d"><span>82o</span></div>
<div class="cell" style="left:266px;top:290px;width:37px;height:24px;line-height:24px;background:#2a2d35;color:#e6e6ea;border-radius:1.5px;box-shadow:0 0 0 1px #24262d"><span>72o</span></div>
<div class="cell" style="left:304px;top:290px;width:37px;height:24px;line-height:24px;background:#2a2d35;color:#e6e6ea;border-radius:1.5px;box-shadow:0 0 0 1px #24262d"><span>62o</span></div>
<div class="cell" style="left:342px;top:290px;width:37px;height:24px;line-height:24px;background:#2a2d35;color:#e6e6ea;border-radius:1.5px;box-shadow:0 0 0 1px #24262d"><span>52o</span></div>
<div class="cell" style="left:380px;top:290px;width:36px;height:24px;line-height:24px;background:#2a2d35;color:#e6e6ea;border-radius:1.5px;box-shadow:0 0 0 1px #24262d"><span>42o</span></div>
<div class="cell" style="left:417px;top:290px;width:37px;height:24px;line-height:24px;background:#2a2d35;color:#e6e6ea;border-radius:1.5px;box-shadow:0 0 0 1px #24262d"><span>32o</span></div>
<div class="cell" style="left:455px;top:290px;width:37px;height:24px;line-height:24px;background:#128c7d;color:#e9f7f4;border-radius:1.5px"><i style="left:0.0px;width:37.3px;background:#a862c8"></i><span>22</span></div>
</div>
<div class="a" style="left:540px;top:645px;width:178px;height:25px;border-radius:12.5px;background:#17181c"></div>
<div class="a" style="left:542px;top:647px;width:60.5px;height:21px;border-radius:10.5px;background:#328a7f"></div>
<div class="t" style="top:654.00px;font-size:10.2px;color:#fff;letter-spacing:0.069px;font-weight:bold;left:551.30px;">Strategy</div>
<div class="t" style="top:654.00px;font-size:10.2px;color:#a3a5ad;letter-spacing:-0.215px;-webkit-text-stroke:0.15px #a3a5ad;left:612.60px;">Range</div>
<div class="t" style="top:654.00px;font-size:10.2px;color:#a3a5ad;letter-spacing:-0.700px;-webkit-text-stroke:0.15px #a3a5ad;left:661.30px;">EV</div>
<div class="t" style="top:654.00px;font-size:10.2px;color:#a3a5ad;letter-spacing:-0.700px;-webkit-text-stroke:0.15px #a3a5ad;left:693.40px;">EQ</div>
<div class="a" style="left:893px;top:645px;width:66px;height:25px;border-radius:12.5px;background:#17181c"></div>
<svg class="a" style="left:902.5px;top:651px" width="14" height="13" viewBox="0 0 14 13"><path d="M.5 2 H13.5 M.5 6.5 H13.5 M.5 11 H13.5" stroke="#9a9ca4" stroke-width="1.4"/></svg>
<div class="a" style="left:925.500px;top:647px;width:32px;height:21px;border-radius:10.5px;background:#328a7f"></div>
<svg class="a" style="left:935px;top:651px" width="13" height="13" viewBox="0 0 13 13"><rect x="0.0" y="0.0" width="3.5" height="3.5" fill="#fff"/><rect x="4.7" y="0.0" width="3.5" height="3.5" fill="#fff"/><rect x="9.4" y="0.0" width="3.5" height="3.5" fill="#fff"/><rect x="0.0" y="4.7" width="3.5" height="3.5" fill="#fff"/><rect x="4.7" y="4.7" width="3.5" height="3.5" fill="#fff"/><rect x="9.4" y="4.7" width="3.5" height="3.5" fill="#fff"/><rect x="0.0" y="9.4" width="3.5" height="3.5" fill="#fff"/><rect x="4.7" y="9.4" width="3.5" height="3.5" fill="#fff"/><rect x="9.4" y="9.4" width="3.5" height="3.5" fill="#fff"/></svg>
<div class="a" style="left:966.5px;top:645px;width:67px;height:25px;border-radius:12.5px;background:#17181c"></div>
<svg class="a" style="left:976.5px;top:651px" width="15" height="13" viewBox="0 0 15 13"><rect x=".7" y=".7" width="13.2" height="11.3" rx="2" fill="none" stroke="#9a9ca4" stroke-width="1.1"/><path d="M3.7 1 V12" stroke="#9a9ca4" stroke-width="1.1"/></svg>
<div class="a" style="left:999.5px;top:647px;width:32.500px;height:21px;border-radius:10.5px;background:#328a7f"></div>
<svg class="a" style="left:1008.5px;top:651px" width="15" height="13" viewBox="0 0 15 13"><rect x=".7" y=".7" width="13.2" height="11.3" rx="2.4" fill="none" stroke="#d5efe9" stroke-width="1.1"/><rect x="2.8" y="2.8" width="9" height="7" rx="1" fill="none" stroke="#d5efe9" stroke-width="1.1"/></svg>
<div class="a" style="left:540.2px;top:677.1px;width:118.2px;height:40px;border-radius:5px;overflow:hidden;background:#128c7d">
<i class="a" style="left:0.0px;top:0;bottom:0;width:8.7px;background:#9e1a0c"></i>
<i class="a" style="left:8.7px;top:0;bottom:0;width:35.2px;background:#a862c8"></i>
</div>
<div class="a" style="left:543.9px;top:682.1px;width:17px;height:9.9px;border-radius:2.5px;background:#d63b5b"></div>
<div class="t" style="top:683.00px;font-size:9.2px;color:#fff;-webkit-text-stroke:0.3px #fff;left:544.70px;">Q</div>
<div class="t" style="left:552.3px;top:681.6px;font-size:9.6px;color:#fff;font-family:'DejaVu Sans',sans-serif">&#9829;</div>
<div class="a" style="left:564.7px;top:682.1px;width:17px;height:9.9px;border-radius:2.5px;background:#d63b5b"></div>
<div class="t" style="top:683.00px;font-size:9.2px;color:#fff;-webkit-text-stroke:0.3px #fff;left:566.30px;">8</div>
<div class="t" style="left:573.1px;top:681.6px;font-size:9.6px;color:#fff;font-family:'DejaVu Sans',sans-serif">&#9829;</div>
<div class="t" style="top:684.00px;font-size:8.9px;color:#f4f4f6;letter-spacing:-0.378px;-webkit-text-stroke:0.15px #f4f4f6;left:254.32px;width:400px;text-align:right;">EV 1.49</div>
<div class="t" style="top:700.00px;font-size:9.2px;color:#f4f4f6;letter-spacing:-0.099px;-webkit-text-stroke:0.15px #f4f4f6;left:544.30px;">Fold</div>
<div class="t" style="top:700.00px;font-size:8.9px;color:#e6f3f0;letter-spacing:0.100px;left:254.80px;width:400px;text-align:right;">0% &middot; EV 0.00</div>
<div class="a" style="left:665.5px;top:677.1px;width:118.2px;height:40px;border-radius:5px;overflow:hidden;background:#128c7d">
<i class="a" style="left:0.0px;top:0;bottom:0;width:54.5px;background:#a862c8"></i>
</div>
<div class="a" style="left:669.2px;top:682.1px;width:17px;height:9.9px;border-radius:2.5px;background:#4d6fe0"></div>
<div class="t" style="top:683.00px;font-size:9.2px;color:#fff;-webkit-text-stroke:0.3px #fff;left:670.00px;">Q</div>
<div class="t" style="left:677.6px;top:681.6px;font-size:9.6px;color:#fff;font-family:'DejaVu Sans',sans-serif">&#9830;</div>
<div class="a" style="left:690.0px;top:682.1px;width:17px;height:9.9px;border-radius:2.5px;background:#4d6fe0"></div>
<div class="t" style="top:683.00px;font-size:9.2px;color:#fff;-webkit-text-stroke:0.3px #fff;left:691.60px;">8</div>
<div class="t" style="left:698.4px;top:681.6px;font-size:9.6px;color:#fff;font-family:'DejaVu Sans',sans-serif">&#9830;</div>
<div class="t" style="top:684.00px;font-size:8.9px;color:#f4f4f6;letter-spacing:-0.378px;-webkit-text-stroke:0.15px #f4f4f6;left:379.62px;width:400px;text-align:right;">EV 1.14</div>
<div class="t" style="top:700.00px;font-size:9.2px;color:#f4f4f6;letter-spacing:-0.099px;-webkit-text-stroke:0.15px #f4f4f6;left:669.60px;">Fold</div>
<div class="t" style="top:700.00px;font-size:8.9px;color:#17806f;letter-spacing:0.100px;left:380.10px;width:400px;text-align:right;">0% &middot; EV 0.00</div>
<div class="a" style="left:790.2px;top:677.1px;width:118.2px;height:40px;border-radius:5px;overflow:hidden;background:#128c7d">
<i class="a" style="left:0.0px;top:0;bottom:0;width:28.1px;background:#a862c8"></i>
</div>
<div class="a" style="left:793.9px;top:682.1px;width:17px;height:9.9px;border-radius:2.5px;background:#5f8a1e"></div>
<div class="t" style="top:683.00px;font-size:9.2px;color:#fff;-webkit-text-stroke:0.3px #fff;left:794.70px;">Q</div>
<div class="t" style="left:802.3px;top:681.6px;font-size:9.6px;color:#fff;font-family:'DejaVu Sans',sans-serif">&#9827;</div>
<div class="a" style="left:814.7px;top:682.1px;width:17px;height:9.9px;border-radius:2.5px;background:#5f8a1e"></div>
<div class="t" style="top:683.00px;font-size:9.2px;color:#fff;-webkit-text-stroke:0.3px #fff;left:816.30px;">8</div>
<div class="t" style="left:823.1px;top:681.6px;font-size:9.6px;color:#fff;font-family:'DejaVu Sans',sans-serif">&#9827;</div>
<div class="t" style="top:684.00px;font-size:8.9px;color:#f4f4f6;letter-spacing:-0.378px;-webkit-text-stroke:0.15px #f4f4f6;left:504.32px;width:400px;text-align:right;">EV 1.46</div>
<div class="t" style="top:700.00px;font-size:9.2px;color:#f4f4f6;letter-spacing:-0.099px;-webkit-text-stroke:0.15px #f4f4f6;left:794.30px;">Fold</div>
<div class="t" style="top:700.00px;font-size:8.9px;color:#17806f;letter-spacing:0.100px;left:504.80px;width:400px;text-align:right;">0% &middot; EV 0.00</div>
<div class="a" style="left:915.5px;top:677.1px;width:118.2px;height:40px;border-radius:5px;overflow:hidden;background:#128c7d">
<i class="a" style="left:0.0px;top:0;bottom:0;width:26.4px;background:#a862c8"></i>
</div>
<div class="a" style="left:919.2px;top:682.1px;width:17px;height:9.9px;border-radius:2.5px;background:#2b2d36"></div>
<div class="t" style="top:683.00px;font-size:9.2px;color:#fff;-webkit-text-stroke:0.3px #fff;left:920.00px;">Q</div>
<div class="t" style="left:927.6px;top:681.6px;font-size:9.6px;color:#fff;font-family:'DejaVu Sans',sans-serif">&#9824;</div>
<div class="a" style="left:940.0px;top:682.1px;width:17px;height:9.9px;border-radius:2.5px;background:#2b2d36"></div>
<div class="t" style="top:683.00px;font-size:9.2px;color:#fff;-webkit-text-stroke:0.3px #fff;left:941.60px;">8</div>
<div class="t" style="left:948.4px;top:681.6px;font-size:9.6px;color:#fff;font-family:'DejaVu Sans',sans-serif">&#9824;</div>
<div class="t" style="top:684.00px;font-size:8.9px;color:#f4f4f6;letter-spacing:-0.378px;-webkit-text-stroke:0.15px #f4f4f6;left:629.62px;width:400px;text-align:right;">EV 1.45</div>
<div class="t" style="top:700.00px;font-size:9.2px;color:#f4f4f6;letter-spacing:-0.099px;-webkit-text-stroke:0.15px #f4f4f6;left:919.60px;">Fold</div>
<div class="t" style="top:700.00px;font-size:8.9px;color:#17806f;letter-spacing:0.100px;left:630.10px;width:400px;text-align:right;">0% &middot; EV 0.00</div>
<div class="a" style="left:1073.4px;top:113.3px;width:314px;height:610px;background:#1c1d23;border-radius:6px 6px 0 0"></div>
<div class="a" style="left:1396.5px;top:470px;width:3.5px;height:240px;background:#3c3e44"></div>
<div class="t" style="top:126.00px;font-size:9.6px;color:#8c7bf0;letter-spacing:0.245px;font-weight:bold;left:1090.80px;">60.4%</div>
<div class="t" style="top:126.00px;font-size:9.9px;color:#b9bbc2;letter-spacing:-0.030px;font-weight:bold;left:1030.98px;width:400px;text-align:center;">Equity</div>
<div class="t" style="top:126.00px;font-size:9.6px;color:#f0c23c;letter-spacing:-0.005px;font-weight:bold;left:970.09px;width:400px;text-align:right;">39.6%</div>
<div class="a" style="left:1091.6px;top:140.5px;width:278px;height:3.6px;border-radius:2px;background:#f0c23c;overflow:hidden"><i class="a" style="left:0;top:0;bottom:0;width:60.4%;background:#8c7bf0"></i></div>
<div class="t" style="top:152.00px;font-size:9.6px;color:#8c7bf0;letter-spacing:0.027px;font-weight:bold;left:1090.80px;">5.4</div>
<div class="t" style="top:152.00px;font-size:9.9px;color:#b9bbc2;letter-spacing:-0.041px;font-weight:bold;left:1030.78px;width:400px;text-align:center;">Expected Value</div>
<div class="t" style="top:152.00px;font-size:9.6px;color:#f0c23c;letter-spacing:-0.373px;font-weight:bold;left:969.73px;width:400px;text-align:right;">1.8</div>
<div class="a" style="left:1091.6px;top:167.1px;width:278px;height:3.6px;border-radius:2px;background:#f0c23c;overflow:hidden"><i class="a" style="left:0;top:0;bottom:0;width:75%;background:#8c7bf0"></i></div>
<div class="a" style="left:1085px;top:196px;width:292px;height:182px;border-radius:91px;background:radial-gradient(closest-side,rgba(30,140,125,.20) 60%,rgba(30,140,125,0) 100%)"></div>
<div class="a" style="left:1189.4px;top:183.5px;width:40.800px;height:40px;border-radius:4px;background:#173f3b;border:1px solid #1f544d"></div>
<div class="a" style="left:1230.8px;top:183.5px;width:40.800px;height:40px;border-radius:4px;background:#173f3b;border:1px solid #1f544d"></div>
<div class="a" style="left:1101.8px;top:209.8px;width:258.6px;height:152.900px;border-radius:77px;background:#07090a;border:1.6px solid #3cc3ad;box-shadow:0 0 9px 2px rgba(45,180,160,.5),inset 0 0 0 2.6px #0d4f48"></div>
<div class="a" style="left:1109.2px;top:216.6px;width:244.4px;height:139.300px;border-radius:70px;background:linear-gradient(to bottom,rgba(0,0,0,0) 50%,rgba(0,0,0,.38) 100%),radial-gradient(ellipse at 50% 45%,#11917f 0%,#0f8173 38%,#0b665d 70%,#08473f 100%)"></div>
<div class="a" style="left:1133px;top:233px;width:196px;height:106px;border-radius:53px;border:1px solid rgba(80,200,180,.2)"></div>
<div class="a" style="left:1189.4px;top:329.5px;width:40.800px;height:33px;border-radius:4px 4px 0 0;background:rgba(40,130,118,.45);border:1px solid rgba(70,160,145,.5);border-bottom:none"></div>
<div class="a" style="left:1230.8px;top:329.5px;width:40.800px;height:33px;border-radius:4px 4px 0 0;background:rgba(40,130,118,.45);border:1px solid rgba(70,160,145,.5);border-bottom:none"></div>
<div class="a" style="left:1174.8px;top:210px;width:110.5px;height:42.800px;border-radius:21.5px;background:#25262c;box-shadow:0 2px 6px rgba(0,0,0,.35)"></div>
<div class="a" style="left:1246.5px;top:213px;width:36.800px;height:36.800px;border-radius:50%;background:#33324a"></div>
<div class="t" style="top:226.00px;font-size:11.4px;color:#fff;letter-spacing:0.346px;font-weight:bold;left:1190.70px;">36.5 BB</div>
<div class="t" style="top:226.00px;font-size:11.4px;color:#8c7bf0;letter-spacing:-0.201px;font-weight:bold;left:1256.30px;">MP</div>
<div class="a" style="left:1118.7px;top:242.2px;width:49px;height:18.800px;border-radius:9.4px;background:#13413c"></div>
<div class="t" style="top:248.00px;font-size:10.2px;color:#cfd8d6;letter-spacing:-0.244px;-webkit-text-stroke:0.3px #cfd8d6;left:1129.90px;">1.2 BB</div>
<svg class="a" style="left:1167.5px;top:245.7px" width="17" height="17" viewBox="0 0 17 17"><circle cx="8.500" cy="8.500" r="7.8" fill="#d23a35"/><circle cx="8.500" cy="8.500" r="6.9" fill="none" stroke="#f6e4e2" stroke-width="1.9" stroke-dasharray="2.2 3.22"/><circle cx="8.500" cy="8.500" r="4.7" fill="#f3e9e6"/><circle cx="8.500" cy="8.500" r="3.3" fill="#d8453f"/><text x="8.500" y="10.500" font-size="5.5" font-weight="bold" text-anchor="middle" fill="#fff" font-family="Liberation Sans,sans-serif">$</text></svg>
<div class="a" style="left:1179.5px;top:254.5px;width:31.8px;height:40px;border-radius:3.5px;background:#30323c;overflow:hidden"><div class="a" style="left:13px;top:3px;width:24px;height:40px;border-radius:50%;background:#3c3f4a;opacity:.5;transform:rotate(18deg)"></div></div>
<div class="t" style="top:259.00px;font-size:10.2px;color:#fff;-webkit-text-stroke:0.2px #fff;left:1182.90px;">T</div>
<div class="t" style="left:1180.9px;top:279.8px;font-size:12.5px;color:#fff;font-family:'DejaVu Sans',sans-serif">&#9824;</div>
<div class="t" style="top:265.00px;font-size:26px;color:#fff;-webkit-text-stroke:0.45px #fff;left:1002.30px;width:400px;text-align:center;transform:scaleX(0.78);">T</div>
<div class="a" style="left:1214.4px;top:254.5px;width:31.8px;height:40px;border-radius:3.5px;background:#d23a5a;overflow:hidden"><div class="a" style="left:13px;top:3px;width:24px;height:40px;border-radius:50%;background:#dd5673;opacity:.5;transform:rotate(18deg)"></div></div>
<div class="t" style="top:259.00px;font-size:10.2px;color:#fff;-webkit-text-stroke:0.2px #fff;left:1217.80px;">9</div>
<div class="t" style="left:1215.8000000000002px;top:279.8px;font-size:12.5px;color:#fff;font-family:'DejaVu Sans',sans-serif">&#9829;</div>
<div class="t" style="top:266.00px;font-size:23px;color:#fff;-webkit-text-stroke:0.45px #fff;left:1037.20px;width:400px;text-align:center;transform:scaleX(0.96);">9</div>
<div class="a" style="left:1249.7px;top:254.5px;width:31.8px;height:40px;border-radius:3.5px;background:#5b851d;overflow:hidden"><div class="a" style="left:13px;top:3px;width:24px;height:40px;border-radius:50%;background:#6b962c;opacity:.5;transform:rotate(18deg)"></div></div>
<div class="t" style="top:259.00px;font-size:10.2px;color:#fff;-webkit-text-stroke:0.2px #fff;left:1253.10px;">2</div>
<div class="t" style="left:1251.1000000000001px;top:279.8px;font-size:12.5px;color:#fff;font-family:'DejaVu Sans',sans-serif">&#9827;</div>
<div class="t" style="top:266.00px;font-size:23px;color:#fff;-webkit-text-stroke:0.45px #fff;left:1072.50px;width:400px;text-align:center;transform:scaleX(0.96);">2</div>
<div class="t" style="top:307.00px;font-size:11.4px;color:#eef5f4;letter-spacing:0.113px;left:1189.00px;">Pot size: 7.2 BB</div>
<div class="a" style="left:1174.5px;top:355.2px;width:111.5px;height:43px;border-radius:22px;background:#25262c;border:1.6px solid #f0c23c;box-shadow:0 0 8px 1px rgba(240,194,60,.3)"></div>
<div class="a" style="left:1248px;top:359.2px;width:35px;height:35px;border-radius:50%;background:#3a362c"></div>
<div class="t" style="top:372.00px;font-size:11.4px;color:#fff;letter-spacing:0.013px;font-weight:bold;left:1192.40px;">37.7 BB</div>
<div class="t" style="top:372.00px;font-size:11.4px;color:#f0c23c;letter-spacing:-0.700px;font-weight:bold;left:1258.00px;">BB</div>
<div class="a" style="left:1092.3px;top:381.5px;width:21px;height:21px;border-radius:50%;background:#1a1b20;border:1px solid #2a2c33"></div>
<svg class="a" style="left:1096.5px;top:387px" width="13" height="10" viewBox="0 0 13 10"><path d="M12 5 H2 M5.2 1.6 L1.6 5 L5.2 8.400" fill="none" stroke="#fff" stroke-width="1.5" stroke-linejoin="round"/></svg>
<div class="a" style="left:1118.6px;top:416.4px;width:60.400px;height:28.600px;border-radius:6px;background:#4a4b50"></div>
<div class="t" style="top:425.00px;font-size:12px;color:#73757b;letter-spacing:-0.175px;font-weight:bold;left:1136.60px;">Fold</div>
<div class="a" style="left:1185px;top:416.4px;width:56.600px;height:28.600px;border-radius:6px;background:#168a7c;box-shadow:0 0 8px rgba(22,138,124,.4)"></div>
<div class="t" style="top:425.00px;font-size:12px;color:#fff;letter-spacing:-0.469px;font-weight:bold;left:1203.00px;">Call</div>
<div class="a" style="left:1247px;top:416.4px;width:95px;height:28.600px;border-radius:6px;background:#a75fc8;box-shadow:0 0 8px rgba(167,95,200,.35)"></div>
<div class="t" style="top:425.00px;font-size:12px;color:#fff;letter-spacing:-0.122px;font-weight:bold;left:1265.60px;">Raise 50%</div>
<div class="a" style="left:1196.6px;top:451.6px;width:67px;height:28.400px;border-radius:6px;background:#8b150c;box-shadow:0 0 8px rgba(139,21,12,.45)"></div>
<div class="t" style="top:461.00px;font-size:12px;color:#fff;letter-spacing:0.334px;font-weight:bold;left:1215.00px;">All In</div>
<div class="t" style="top:534.00px;font-size:9.6px;color:#9ea0a8;letter-spacing:0.146px;left:1094.00px;">ACTION</div>
<div class="t" style="top:534.00px;font-size:9.6px;color:#9ea0a8;letter-spacing:-0.556px;left:1158.50px;">FREQ</div>
<div class="t" style="top:546.00px;font-size:9.6px;color:#9ea0a8;letter-spacing:-0.401px;left:1158.50px;">UENC</div>
<div class="t" style="top:558.00px;font-size:9.6px;color:#9ea0a8;left:1158.50px;">Y</div>
<div class="t" style="top:578.00px;font-size:12.2px;color:#f4f4f6;letter-spacing:-0.572px;-webkit-text-stroke:0.3px #f4f4f6;left:1094.00px;">Call</div>
<div class="t" style="top:578.00px;font-size:12.2px;color:#f4f4f6;letter-spacing:-0.700px;-webkit-text-stroke:0.3px #f4f4f6;left:786.30px;width:400px;text-align:right;">52%</div>
<div class="a" style="left:1200px;top:577.9px;width:170px;height:5px;border-radius:2.5px;border:1px solid #383a41;background:#1a1b20;overflow:hidden"><i class="a" style="left:-1px;top:-1px;bottom:-1px;width:51.8%;background:#128c7d"></i></div>
<div class="t" style="top:601.00px;font-size:12.2px;color:#f4f4f6;letter-spacing:-0.111px;-webkit-text-stroke:0.3px #f4f4f6;left:1094.00px;">Fold</div>
<div class="t" style="top:601.00px;font-size:12.2px;color:#f4f4f6;letter-spacing:-0.700px;-webkit-text-stroke:0.3px #f4f4f6;left:786.30px;width:400px;text-align:right;">32.3%</div>
<div class="a" style="left:1200px;top:601.4px;width:170px;height:5px;border-radius:2.5px;border:1px solid #383a41;background:#1a1b20;overflow:hidden"><i class="a" style="left:-1px;top:-1px;bottom:-1px;width:32.3%;background:#8d8d8d"></i></div>
<div class="t" style="top:625.00px;font-size:12.2px;color:#f4f4f6;letter-spacing:-0.412px;-webkit-text-stroke:0.3px #f4f4f6;left:1094.00px;">Raise 50%</div>
<div class="t" style="top:625.00px;font-size:12.2px;color:#f4f4f6;letter-spacing:-0.700px;-webkit-text-stroke:0.3px #f4f4f6;left:786.30px;width:400px;text-align:right;">12.2%</div>
<div class="a" style="left:1200px;top:624.9px;width:170px;height:5px;border-radius:2.5px;border:1px solid #383a41;background:#1a1b20;overflow:hidden"><i class="a" style="left:-1px;top:-1px;bottom:-1px;width:12.2%;background:#a862c8"></i></div>
<div class="t" style="top:648.00px;font-size:12.2px;color:#f4f4f6;letter-spacing:0.495px;-webkit-text-stroke:0.3px #f4f4f6;left:1094.00px;">All In</div>
<div class="t" style="top:648.00px;font-size:12.2px;color:#f4f4f6;letter-spacing:-0.700px;-webkit-text-stroke:0.3px #f4f4f6;left:786.30px;width:400px;text-align:right;">3.4%</div>
<div class="a" style="left:1200px;top:648.5px;width:170px;height:5px;border-radius:2.5px;border:1px solid #383a41;background:#1a1b20;overflow:hidden"><i class="a" style="left:-1px;top:-1px;bottom:-1px;width:3.4%;background:#9e1a0c"></i></div>
</div></body></html>
